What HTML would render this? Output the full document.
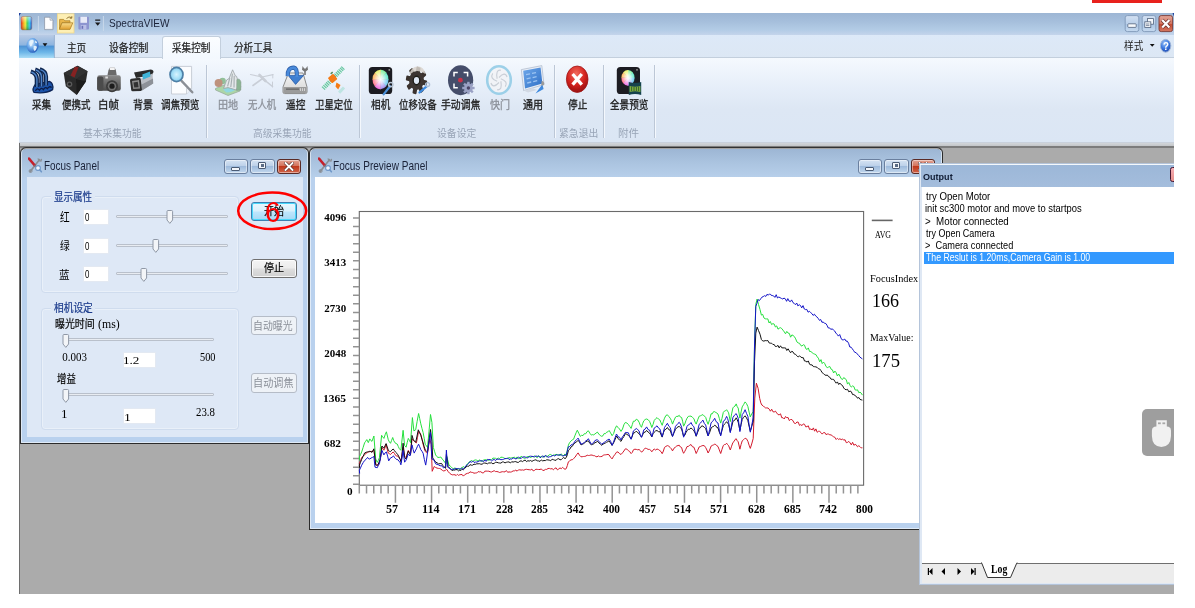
<!DOCTYPE html>
<html><head><meta charset="utf-8"><title>SpectraVIEW</title>
<style>
html,body{margin:0;padding:0;background:#fff;}
body{width:1195px;height:608px;position:relative;overflow:hidden;font-family:'Liberation Sans','Noto Sans CJK SC',sans-serif;}
div,svg{position:absolute;box-sizing:border-box;}
.t{position:absolute;white-space:nowrap;line-height:1;transform-origin:0 0;}
</style></head><body>
<div style="left:1092px;top:0px;width:70px;height:3px;background:#e8211d;"></div>
<div style="left:19px;top:13px;width:1155px;height:22px;background:linear-gradient(#9db6d4 0%,#a6bfdc 40%,#b3cce6 78%,#c4d4eb 100%);"></div>
<div style="left:19px;top:35px;width:1155px;height:23px;background:linear-gradient(#dde9f8,#dce7f4);"></div>
<div style="left:19px;top:57px;width:1155px;height:1px;background:#c3cfdd;"></div>
<div style="left:19px;top:58px;width:1155px;height:85px;background:linear-gradient(#f5f9fe 0%,#e6eef9 35%,#dde7f4 60%,#dbe6f4 100%);"></div>
<div style="left:19px;top:142px;width:1155px;height:1px;background:#c9d1dc;"></div>
<div style="left:19px;top:143px;width:1155px;height:451px;background:#ababab;"></div>
<div style="left:19px;top:143px;width:1155px;height:3.5px;background:linear-gradient(#d2d6da,#bdbfc2);"></div>
<div style="left:19px;top:146.4px;width:1155px;height:1.2px;background:#7c7c7c;"></div>
<div style="left:19px;top:143px;width:1px;height:451px;background:#6e6e6e;"></div>
<svg style="left:19px;top:13px" width="1155" height="46" viewBox="19 13 1155 46"><defs>
<linearGradient id="rainbow" x1="0" x2="1" y1="0" y2="0"><stop offset="0" stop-color="#e8281c"/><stop offset=".2" stop-color="#f59a1c"/><stop offset=".4" stop-color="#f4ea38"/><stop offset=".58" stop-color="#48d058"/><stop offset=".78" stop-color="#38c8e8"/><stop offset="1" stop-color="#2858d8"/></linearGradient>
<linearGradient id="rbshade" x1="0" x2="0" y1="0" y2="1"><stop offset="0" stop-color="#fff" stop-opacity=".55"/><stop offset=".5" stop-color="#fff" stop-opacity="0"/><stop offset="1" stop-color="#000" stop-opacity=".25"/></linearGradient>
<linearGradient id="appbtn" x1="0" x2="0" y1="0" y2="1"><stop offset="0" stop-color="#b9cbe5"/><stop offset=".42" stop-color="#8fb5df"/><stop offset=".5" stop-color="#4f95d6"/><stop offset=".75" stop-color="#6db6e8"/><stop offset="1" stop-color="#a9dcf6"/></linearGradient>
<radialGradient id="globe" cx=".4" cy=".35" r=".7"><stop offset="0" stop-color="#e8f4ff"/><stop offset=".5" stop-color="#6aa8ea"/><stop offset="1" stop-color="#2458b8"/></radialGradient>
<linearGradient id="fold" x1="0" x2="0" y1="0" y2="1"><stop offset="0" stop-color="#f8dc8c"/><stop offset="1" stop-color="#e0a030"/></linearGradient>
<linearGradient id="wbtn" x1="0" x2="0" y1="0" y2="1"><stop offset="0" stop-color="#d3e1f2"/><stop offset=".5" stop-color="#bad0ea"/><stop offset=".52" stop-color="#a9c4e3"/><stop offset="1" stop-color="#c6daf0"/></linearGradient>
<linearGradient id="wclose" x1="0" x2="0" y1="0" y2="1"><stop offset="0" stop-color="#e3a79a"/><stop offset=".5" stop-color="#d37561"/><stop offset=".52" stop-color="#c44a32"/><stop offset="1" stop-color="#d47862"/></linearGradient>
<radialGradient id="help" cx=".4" cy=".3" r=".8"><stop offset="0" stop-color="#9cc4f8"/><stop offset=".5" stop-color="#3a78e0"/><stop offset="1" stop-color="#1a40a8"/></radialGradient>
</defs><path d="M19 13 H21 L19 16Z" fill="#2040a0"/><rect x="21" y="16.5" width="10.8" height="13.4" rx="1.8" fill="url(#rainbow)"/><rect x="21" y="16.5" width="10.8" height="13.4" rx="1.8" fill="url(#rbshade)" stroke="#8a6a5a" stroke-opacity=".6" stroke-width=".7"/><path d="M38.4 16 V31" stroke="#c9d8ea" stroke-width="1"/><path d="M103.4 16 V31" stroke="#c9d8ea" stroke-width="1"/><path d="M44.6 17.2 H50 L53 20.2 V29.6 H44.6Z" fill="#fdfdfe" stroke="#8c96a6" stroke-width=".8"/><path d="M50 17.2 V20.2 H53" fill="#dfe4ec" stroke="#8c96a6" stroke-width=".6"/><path d="M46 29.3 H53 V22" stroke="#aab2c0" stroke-width="1" fill="none" opacity=".6"/><rect x="57.4" y="13.8" width="16.6" height="19.2" fill="#fdefb4" stroke="#f2d98a" stroke-width=".8"/><path d="M59.6 19.4 H63.6 L64.8 20.8 H70 V22.6 H62 L59.6 28.8Z" fill="#e9b54a" stroke="#a97a1e" stroke-width=".7"/><path d="M62 22.8 H72.8 L70 29.4 H59.4Z" fill="url(#fold)" stroke="#a97a1e" stroke-width=".7"/><path d="M66.5 18.5 Q69 15.8 71.6 17.6 M71.8 16.2 V18.2 H69.8" fill="none" stroke="#8a6c2a" stroke-width=".9"/><rect x="78.4" y="16.8" width="10.6" height="12.8" rx="1" fill="#8d95d0"/><rect x="80.4" y="16.8" width="6.6" height="6" fill="#e8ebf8"/><rect x="80.8" y="25" width="5.6" height="4.6" fill="#b9bfe6"/><rect x="81.6" y="25.8" width="1.6" height="3" fill="#6a72b8"/><path d="M95.2 19.6 H100.2 V20.8 H95.2Z M95 22.4 H100.4 L97.7 25.8Z" fill="#1a1a1a"/><rect x="19" y="35" width="35.4" height="23" fill="url(#appbtn)"/><path d="M54.4 35 V58" stroke="#8fa9cc" stroke-width=".8"/><ellipse cx="32.6" cy="45.4" rx="6" ry="7.4" fill="url(#globe)"/><path d="M29.4 41.2 q2 -2 4 -1.2 q1 2.2 -1 3.4 q-.4 2.6 -2 3.2 q-1.6 -2.4 -1 -5.4z M33.6 46 q2.4 -.6 3.4 1 q-.6 3 -2.6 4 q-1.4 -2.4 -.8 -5z M35.2 40.6 q1.6 .8 2.2 2.6 q-1.6 .2 -2.4 -.8z" fill="#e9f4fc" opacity=".92"/><path d="M42.6 43.2 H47.4 L45 46.6Z" fill="#111"/><rect x="1125.2" y="15.6" width="13.6" height="16" rx="2.2" fill="url(#wbtn)" stroke="#7f97b8" stroke-width=".9"/><rect x="1127.8" y="23.8" width="8.4" height="3.6" rx=".8" fill="#f6f9fc" stroke="#51627c" stroke-width=".8"/><rect x="1142.2" y="15.6" width="13.6" height="16" rx="2.2" fill="url(#wbtn)" stroke="#7f97b8" stroke-width=".9"/><rect x="1147.4" y="18.6" width="6" height="5.6" fill="#f6f9fc" stroke="#51627c" stroke-width=".8"/><rect x="1144.8" y="21.8" width="6" height="5.6" fill="#f6f9fc" stroke="#51627c" stroke-width=".8"/><path d="M1146.0 24 h3.4 M1146.0 25.6 h3.4" stroke="#51627c" stroke-width=".7"/><rect x="1159" y="15.6" width="13.6" height="16" rx="2.2" fill="url(#wclose)" stroke="#7a3a34" stroke-width=".9"/><path d="M1162.2 20 L1169.3999999999999 27.4 M1169.3999999999999 20 L1162.2 27.4" stroke="#6a3028" stroke-width="3.6"/><path d="M1162.2 20 L1169.3999999999999 27.4 M1169.3999999999999 20 L1162.2 27.4" stroke="#fff" stroke-width="2.2"/><path d="M1172.5 13 H1174 V16.5Z" fill="#2040a0"/><path d="M1149.8 44 H1154.6 L1152.2 46.8Z" fill="#111"/><ellipse cx="1165.6" cy="45.8" rx="5.2" ry="6.4" fill="url(#help)" stroke="#9fb6d8" stroke-width="1"/></svg>
<span class="t" style="left:1162.52px;top:40.55px;font-family:'Liberation Sans','Noto Sans CJK SC',sans-serif;font-size:11px;font-weight:bold;color:#fff;transform:scale(0.880,1.050);">?</span>
<span class="t" style="left:108.86px;top:18.07px;font-family:'Liberation Sans','Noto Sans CJK SC',sans-serif;font-size:12px;font-weight:normal;color:#1a2238;transform:scale(0.839,0.933);">SpectraVIEW</span>
<div style="left:161.5px;top:36px;width:59px;height:23px;background:linear-gradient(#fbfdff,#f3f8fe);border:1px solid #c3cfdd;border-bottom:none;border-radius:3px 3px 0 0;"></div>
<span class="t" style="left:66.50px;top:43.11px;font-family:'Liberation Sans','Noto Sans CJK SC',sans-serif;font-size:12px;font-weight:normal;color:#1e1e1e;transform:scale(0.800,0.908);-webkit-text-stroke:0.25px #1e1e1e;">主页</span>
<span class="t" style="left:109.20px;top:42.92px;font-family:'Liberation Sans','Noto Sans CJK SC',sans-serif;font-size:12px;font-weight:normal;color:#1e1e1e;transform:scale(0.819,0.917);-webkit-text-stroke:0.25px #1e1e1e;">设备控制</span>
<span class="t" style="left:172.00px;top:42.92px;font-family:'Liberation Sans','Noto Sans CJK SC',sans-serif;font-size:12px;font-weight:normal;color:#1e1e1e;transform:scale(0.800,0.917);-webkit-text-stroke:0.25px #1e1e1e;">采集控制</span>
<span class="t" style="left:233.90px;top:42.92px;font-family:'Liberation Sans','Noto Sans CJK SC',sans-serif;font-size:12px;font-weight:normal;color:#1e1e1e;transform:scale(0.802,0.917);-webkit-text-stroke:0.25px #1e1e1e;">分析工具</span>
<span class="t" style="left:1123.70px;top:41.12px;font-family:'Liberation Sans','Noto Sans CJK SC',sans-serif;font-size:12px;font-weight:normal;color:#1e1e1e;transform:scale(0.804,0.917);">样式</span>
<span class="t" style="left:32.40px;top:100.22px;font-family:'Liberation Sans','Noto Sans CJK SC',sans-serif;font-size:12px;font-weight:normal;color:#1a1a1a;transform:scale(0.800,0.917);-webkit-text-stroke:0.3px #1a1a1a;">采集</span>
<span class="t" style="left:61.70px;top:100.22px;font-family:'Liberation Sans','Noto Sans CJK SC',sans-serif;font-size:12px;font-weight:normal;color:#1a1a1a;transform:scale(0.789,0.917);-webkit-text-stroke:0.3px #1a1a1a;">便携式</span>
<span class="t" style="left:98.43px;top:100.22px;font-family:'Liberation Sans','Noto Sans CJK SC',sans-serif;font-size:12px;font-weight:normal;color:#1a1a1a;transform:scale(0.874,0.917);-webkit-text-stroke:0.3px #1a1a1a;">白帧</span>
<span class="t" style="left:132.76px;top:100.22px;font-family:'Liberation Sans','Noto Sans CJK SC',sans-serif;font-size:12px;font-weight:normal;color:#1a1a1a;transform:scale(0.839,0.917);-webkit-text-stroke:0.3px #1a1a1a;">背景</span>
<span class="t" style="left:161.30px;top:100.22px;font-family:'Liberation Sans','Noto Sans CJK SC',sans-serif;font-size:12px;font-weight:normal;color:#1a1a1a;transform:scale(0.802,0.917);-webkit-text-stroke:0.3px #1a1a1a;">调焦预览</span>
<span class="t" style="left:217.56px;top:100.22px;font-family:'Liberation Sans','Noto Sans CJK SC',sans-serif;font-size:12px;font-weight:normal;color:#8b9099;transform:scale(0.839,0.917);-webkit-text-stroke:0.3px #8b9099;">田地</span>
<span class="t" style="left:247.70px;top:100.22px;font-family:'Liberation Sans','Noto Sans CJK SC',sans-serif;font-size:12px;font-weight:normal;color:#8b9099;transform:scale(0.786,0.917);-webkit-text-stroke:0.3px #8b9099;">无人机</span>
<span class="t" style="left:286.00px;top:100.22px;font-family:'Liberation Sans','Noto Sans CJK SC',sans-serif;font-size:12px;font-weight:normal;color:#1a1a1a;transform:scale(0.808,0.917);-webkit-text-stroke:0.3px #1a1a1a;">遥控</span>
<span class="t" style="left:314.60px;top:100.22px;font-family:'Liberation Sans','Noto Sans CJK SC',sans-serif;font-size:12px;font-weight:normal;color:#1a1a1a;transform:scale(0.785,0.917);-webkit-text-stroke:0.3px #1a1a1a;">卫星定位</span>
<span class="t" style="left:370.70px;top:100.22px;font-family:'Liberation Sans','Noto Sans CJK SC',sans-serif;font-size:12px;font-weight:normal;color:#1a1a1a;transform:scale(0.804,0.917);-webkit-text-stroke:0.3px #1a1a1a;">相机</span>
<span class="t" style="left:399.20px;top:100.22px;font-family:'Liberation Sans','Noto Sans CJK SC',sans-serif;font-size:12px;font-weight:normal;color:#1a1a1a;transform:scale(0.785,0.917);-webkit-text-stroke:0.3px #1a1a1a;">位移设备</span>
<span class="t" style="left:441.00px;top:100.22px;font-family:'Liberation Sans','Noto Sans CJK SC',sans-serif;font-size:12px;font-weight:normal;color:#1a1a1a;transform:scale(0.821,0.917);-webkit-text-stroke:0.3px #1a1a1a;">手动调焦</span>
<span class="t" style="left:489.60px;top:100.22px;font-family:'Liberation Sans','Noto Sans CJK SC',sans-serif;font-size:12px;font-weight:normal;color:#8b9099;transform:scale(0.835,0.917);-webkit-text-stroke:0.3px #8b9099;">快门</span>
<span class="t" style="left:523.00px;top:100.22px;font-family:'Liberation Sans','Noto Sans CJK SC',sans-serif;font-size:12px;font-weight:normal;color:#1a1a1a;transform:scale(0.839,0.917);-webkit-text-stroke:0.3px #1a1a1a;">通用</span>
<span class="t" style="left:567.60px;top:100.22px;font-family:'Liberation Sans','Noto Sans CJK SC',sans-serif;font-size:12px;font-weight:normal;color:#1a1a1a;transform:scale(0.804,0.917);-webkit-text-stroke:0.3px #1a1a1a;">停止</span>
<span class="t" style="left:609.50px;top:100.22px;font-family:'Liberation Sans','Noto Sans CJK SC',sans-serif;font-size:12px;font-weight:normal;color:#1a1a1a;transform:scale(0.802,0.917);-webkit-text-stroke:0.3px #1a1a1a;">全景预览</span>
<span class="t" style="left:83.49px;top:129.34px;font-family:'Liberation Sans','Noto Sans CJK SC',sans-serif;font-size:12px;font-weight:normal;color:#98a4b6;transform:scale(0.813,0.842);">基本采集功能</span>
<span class="t" style="left:252.79px;top:129.34px;font-family:'Liberation Sans','Noto Sans CJK SC',sans-serif;font-size:12px;font-weight:normal;color:#98a4b6;transform:scale(0.813,0.842);">高级采集功能</span>
<span class="t" style="left:436.88px;top:129.34px;font-family:'Liberation Sans','Noto Sans CJK SC',sans-serif;font-size:12px;font-weight:normal;color:#98a4b6;transform:scale(0.819,0.842);">设备设定</span>
<span class="t" style="left:559.18px;top:129.34px;font-family:'Liberation Sans','Noto Sans CJK SC',sans-serif;font-size:12px;font-weight:normal;color:#98a4b6;transform:scale(0.820,0.842);">紧急退出</span>
<span class="t" style="left:617.82px;top:129.34px;font-family:'Liberation Sans','Noto Sans CJK SC',sans-serif;font-size:12px;font-weight:normal;color:#98a4b6;transform:scale(0.877,0.842);">附件</span>
<div style="left:206.0px;top:65px;width:1px;height:73px;background:#bcc7d6;"></div>
<div style="left:207.0px;top:65px;width:1px;height:73px;background:#f4f8fd;"></div>
<div style="left:358.8px;top:65px;width:1px;height:73px;background:#bcc7d6;"></div>
<div style="left:359.8px;top:65px;width:1px;height:73px;background:#f4f8fd;"></div>
<div style="left:554.3px;top:65px;width:1px;height:73px;background:#bcc7d6;"></div>
<div style="left:555.3px;top:65px;width:1px;height:73px;background:#f4f8fd;"></div>
<div style="left:603.1px;top:65px;width:1px;height:73px;background:#bcc7d6;"></div>
<div style="left:604.1px;top:65px;width:1px;height:73px;background:#f4f8fd;"></div>
<div style="left:654.1px;top:65px;width:1px;height:73px;background:#bcc7d6;"></div>
<div style="left:655.1px;top:65px;width:1px;height:73px;background:#f4f8fd;"></div>
<svg style="left:19px;top:58px" width="660" height="45" viewBox="19 58 660 45"><defs>
<linearGradient id="pipe" x1="0" x2="1" y1="0" y2="0"><stop offset="0" stop-color="#16386f"/><stop offset=".45" stop-color="#5d93d6"/><stop offset="1" stop-color="#17407f"/></linearGradient>
<linearGradient id="cam" x1="0" x2="0" y1="0" y2="1"><stop offset="0" stop-color="#8a8a8a"/><stop offset="1" stop-color="#4a4a4a"/></linearGradient>
<radialGradient id="lens" cx=".5" cy=".5" r=".5"><stop offset="0" stop-color="#d8f4ff"/><stop offset=".7" stop-color="#9fdcf6"/><stop offset="1" stop-color="#7cc3e6"/></radialGradient>
<radialGradient id="stopg" cx=".45" cy=".3" r=".75"><stop offset="0" stop-color="#f26a5c"/><stop offset=".55" stop-color="#d42420"/><stop offset="1" stop-color="#8e0c0c"/></radialGradient>
<radialGradient id="rb" cx=".5" cy=".5" r=".5"><stop offset="0" stop-color="#fff"/><stop offset=".35" stop-color="#fff" stop-opacity=".75"/><stop offset="1" stop-color="#fff" stop-opacity="0"/></radialGradient>
<linearGradient id="tray" x1="0" x2="0" y1="0" y2="1"><stop offset="0" stop-color="#f6f6f6"/><stop offset="1" stop-color="#d4d4d4"/></linearGradient>
<linearGradient id="mon" x1="0" x2="1" y1="0" y2="1"><stop offset="0" stop-color="#6fa8ea"/><stop offset="1" stop-color="#2f6fc6"/></linearGradient>
<filter id="soft" x="-10%" y="-10%" width="120%" height="120%"><feGaussianBlur stdDeviation="0.35"/></filter>
</defs><g filter="url(#soft)"><g>
<path d="M34 92.4 Q31.6 89 35.4 84.4 L49.5 81.4 Q54 84 52.6 89.6 Q46 94 34 92.4Z" fill="#1c54ac" stroke="#0b2558" stroke-width="1.3"/>
<path d="M36.8 87 V79 Q36.6 73.4 30.8 71.6" fill="none" stroke="#10264f" stroke-width="4.2"/>
<path d="M36.9 87 V79 Q36.8 73.8 31.4 72" fill="none" stroke="#4f84c8" stroke-width="1.4"/>
<path d="M41.4 86.4 V77 Q41.2 71.4 35.2 69.6" fill="none" stroke="#10264f" stroke-width="4.2"/>
<path d="M41.5 86.4 V77 Q41.4 71.8 35.8 70" fill="none" stroke="#4f84c8" stroke-width="1.4"/>
<path d="M46 85.6 V76.6 Q45.8 71 39.8 69.2" fill="none" stroke="#10264f" stroke-width="4.2"/>
<path d="M46.1 85.6 V76.6 Q46 71.4 40.4 69.6" fill="none" stroke="#4f84c8" stroke-width="1.4"/>
<path d="M35.4 90.8 q2-3.4 4-0.6 q2-3.4 4-0.6 q2-3.4 4-0.9 q2-3.2 4.2-1.2" fill="none" stroke="#081c46" stroke-width="1.3"/>
</g><g>
<path d="M77.6 65.8 L87.6 71.2 L85.9 81.5 L76.7 95 L65.8 86.3 L63.7 72.9Z" fill="#2b2b2b"/>
<path d="M77.6 65.8 L87.6 71.2 L76 79 L63.7 72.9Z" fill="#323232"/>
<path d="M74.8 66.8 L78.6 67 L74.5 77.5 L70.5 75.6Z" fill="#862222"/>
<path d="M76 79 L85.9 81.5 L76.7 95Z" fill="#1e1e1e"/>
<circle cx="69.5" cy="84.2" r="2.8" fill="#5a5a5a"/><circle cx="69.5" cy="84.2" r="1.4" fill="#222"/>
</g><g>
<path d="M108.5 70 L110 67.6 L114.6 67.6 L115.8 70 L116.8 75.6 L107.4 75.6Z" fill="#6a6a6a"/>
<rect x="109.8" y="67.4" width="5" height="2.6" fill="#f4f4f4"/>
<rect x="97.2" y="75.2" width="23.6" height="15.6" rx="2.2" fill="url(#cam)"/>
<rect x="97.2" y="76.5" width="6.2" height="14.3" rx="2" fill="#4c4c4c"/>
<rect x="105.3" y="76.5" width="2.6" height="2" fill="#ddd"/>
<circle cx="112" cy="86.2" r="6" fill="#3c3c3c"/><circle cx="112" cy="86.2" r="4.2" fill="#707070"/><circle cx="112" cy="86.2" r="2.6" fill="#1c1c1c"/>
</g><g>
<path d="M134 72.5 L150.5 69.5 Q153.5 69.6 153.5 72 L152 75 L136 78Z" fill="#2a2a2a"/>
<path d="M141 78.5 L152.5 73.5 L153.2 83.5 L142 90.5Z" fill="#b9bdc4"/><path d="M141.6 84.6 L153 78.6 L153.2 83.5 L142 90.5Z" fill="#8d9198"/>
<path d="M142.3 74.5 L150 71.4 L150.4 76.4 L143 79.6Z" fill="#3fb4d8"/>
<path d="M130 80.4 Q130 79 131.4 78.8 L139.2 77.8 Q140.6 77.8 140.8 79.2 L142 89.6 Q142 90.8 140.8 90.9 L132.6 91.3 Q131.4 91.2 131.2 90Z" fill="#2f2f2f"/>
<path d="M132 81 L139 80 L140 88.6 L133.2 89Z" fill="#8c8c8c"/>
<path d="M133.4 82.4 L137.8 81.8 L138.6 87.2 L134.3 87.5Z" fill="#333"/>
</g><g>
<path d="M171.5 66.4 H191.6 V88.5 L186.5 94 H171.5Z" fill="#fbfcfe" stroke="#c4c9d2" stroke-width="0.9"/>
<path d="M186.5 94 V88.5 H191.6" fill="#eef1f6" stroke="#c4c9d2" stroke-width="0.8"/>
<path d="M181.3 80.6 L192.3 92.3" stroke="#8b8f96" stroke-width="2.4" stroke-linecap="round"/>
<ellipse cx="176.5" cy="74.5" rx="6.5" ry="7.1" fill="url(#lens)" stroke="#4d7fa6" stroke-width="1.7"/>
</g><g opacity=".88">
<path d="M215.5 88.5 L229 83 L240.8 86 L240 91 L228 95.5 L215.5 90Z" fill="#a4d29c" stroke="#8a9a8a" stroke-width=".7"/>
<path d="M223 89.4 Q229 86.4 236 88.8 Q233 92.6 226.5 92.6Z" fill="#84d4de"/>
<path d="M223.6 88.4 L226.6 80 L229 78.6 L232.6 69.8 L235.4 76 L236.6 76.4 L239 84.5 L236.4 90 L228 87.6Z" fill="#e4e7e8" stroke="#8e9698" stroke-width=".8"/>
<path d="M227.6 86.4 L229.8 78 M230.8 87 L232.4 73.6 M234 87.4 L234.2 76" stroke="#9ca6a8" stroke-width="1.1"/>
<path d="M236.8 79.6 Q239.6 77.6 241 82 L240.8 90 L236.6 90.4Z" fill="#7fae86" stroke="#7a8c7e" stroke-width=".5"/>
<circle cx="222.6" cy="81" r="3.2" fill="#86b98c"/>
<circle cx="218.6" cy="83" r="4" fill="#b9866e"/>
</g><g opacity=".6" stroke="#b4b8c0" fill="none" stroke-linecap="round">
<path d="M250.5 74.5 L262 77 L273 74.6" stroke-width="1.2"/>
<path d="M253 85.5 L262.5 78.5 L272.5 86.5" stroke-width="1.6"/>
<path d="M259.5 75 L265.5 81" stroke-width="2.6"/>
<path d="M272.8 74.5 V78 M272.5 82 V87" stroke-width="1"/>
</g><g>
<path d="M288.5 73 H303 L307 87 V92 Q307 93.6 305.4 93.6 H284.6 Q283 93.6 283 92 V87Z" fill="url(#tray)" stroke="#8a8a8a" stroke-width="1"/>
<path d="M283.5 87 H306.5 V92 Q306.5 93.1 305.4 93.1 H284.6 Q283.5 93.1 283.5 92Z" fill="#9b9b9b"/>
<path d="M286 89.2 H299" stroke="#6f6f6f" stroke-width="1.6"/>
<path d="M300.5 88.2 V91 M302.5 88.2 V91 M304.5 88.2 V91" stroke="#d8d8d8" stroke-width=".9"/>
<path d="M287.8 76 Q287.2 67.8 293.8 67.6 Q297.4 68.2 296.8 77" fill="none" stroke="#2a5ca6" stroke-width="4.2"/>
<path d="M288.2 75.4 L303.6 75.4 L295.6 84.4Z" fill="#3f7fd0" stroke="#2a5ca6" stroke-width=".8"/>
<path d="M287.8 76 Q287.2 67.8 293.8 67.6 Q297.4 68.2 296.8 77" fill="none" stroke="#4a8ada" stroke-width="2.9"/>
<path d="M302.6 66 L304.2 68.6 L305.8 68.6 L307.4 66 L308 69.8 L305.8 71.4 L305.8 75 L304.2 75 L304.2 71.4 L302 69.8Z" fill="#767676"/>
</g><g>
<g transform="rotate(-46 332.7 78.6)">
<rect x="318.5" y="76.4" width="10.5" height="4.4" fill="#dff3ec"/>
<path d="M319.5 76.4v4.4M321.5 76.4v4.4M323.5 76.4v4.4M325.5 76.4v4.4M327.5 76.4v4.4" stroke="#63c3a2" stroke-width="1.1"/>
<rect x="336.5" y="76.4" width="11.5" height="4.4" fill="#dff3ec"/>
<path d="M337.5 76.4v4.4M339.5 76.4v4.4M341.5 76.4v4.4M343.5 76.4v4.4M345.5 76.4v4.4M347.3 76.4v4.4" stroke="#63c3a2" stroke-width="1.1"/>
<rect x="329" y="77.5" width="7.5" height="2.2" fill="#6a8a7c"/>
</g>
<rect x="329.2" y="75" width="7" height="7" rx="1" transform="rotate(-40 332.7 78.6)" fill="#f57a12"/>
<path d="M336.5 82.5 L340.5 85 L338.2 89.5 L335.5 86.5Z" fill="#f57a12"/>
<path d="M330.2 73.2 l2 -1.6 l1 1.2 l-2 1.6z" fill="#5a8a5a"/>
<g transform="rotate(-46 341.5 90)" opacity=".55"><rect x="338" y="88.6" width="7" height="3" fill="#9fdcd0"/></g>
</g><g><rect x="368.8" y="67" width="23.4" height="27" rx="3.6" fill="#1f1f22"/><g filter="url(#soft)"><g transform="translate(380.5 79.4) scale(1 1.22) translate(-380.5 -79.4)"><path d="M380.5 79.4 L380.50 71.40 A8 8 0 0 1 386.43 74.03Z" fill="#7ff0a0"/><path d="M380.5 79.4 L386.16 73.74 A8 8 0 0 1 388.49 79.80Z" fill="#60e8c8"/><path d="M380.5 79.4 L388.50 79.40 A8 8 0 0 1 385.87 85.33Z" fill="#70c8f0"/><path d="M380.5 79.4 L386.16 85.06 A8 8 0 0 1 380.10 87.39Z" fill="#a090f0"/><path d="M380.5 79.4 L380.50 87.40 A8 8 0 0 1 374.57 84.77Z" fill="#f070e0"/><path d="M380.5 79.4 L374.84 85.06 A8 8 0 0 1 372.51 79.00Z" fill="#ff7890"/><path d="M380.5 79.4 L372.50 79.40 A8 8 0 0 1 375.13 73.47Z" fill="#ffb860"/><path d="M380.5 79.4 L374.84 73.74 A8 8 0 0 1 380.90 71.41Z" fill="#e8f070"/><circle cx="380.5" cy="79.4" r="8" fill="url(#rb)"/></g></g><circle cx="389.3" cy="69.9" r=".9" fill="#9a9a9a"/><path d="M383.6 94.4 L390 86.2" stroke="#4a8fd8" stroke-width="2.2" stroke-linecap="round"/><circle cx="390.8" cy="84.6" r="2.2" fill="none" stroke="#b9c6d6" stroke-width="1.5"/></g><g>
<g transform="translate(416.5 80.5) scale(.78 1) translate(-416.5 -80.5)">
<g fill="#3a332e"><rect x="413.9" y="66.9" width="5.2" height="6" rx="1" transform="rotate(11.5 416.5 80.5)"/><rect x="413.9" y="66.9" width="5.2" height="6" rx="1" transform="rotate(56.5 416.5 80.5)"/><rect x="413.9" y="66.9" width="5.2" height="6" rx="1" transform="rotate(101.5 416.5 80.5)"/><rect x="413.9" y="66.9" width="5.2" height="6" rx="1" transform="rotate(146.5 416.5 80.5)"/><rect x="413.9" y="66.9" width="5.2" height="6" rx="1" transform="rotate(191.5 416.5 80.5)"/><rect x="413.9" y="66.9" width="5.2" height="6" rx="1" transform="rotate(236.5 416.5 80.5)"/><rect x="413.9" y="66.9" width="5.2" height="6" rx="1" transform="rotate(281.5 416.5 80.5)"/><rect x="413.9" y="66.9" width="5.2" height="6" rx="1" transform="rotate(326.5 416.5 80.5)"/></g>
<circle cx="416.5" cy="80.5" r="9.6" fill="#3d3631"/>
<circle cx="416.5" cy="80.5" r="4.2" fill="#dfe7f3"/>
<circle cx="416.5" cy="80.5" r="4.2" fill="none" stroke="#1c1a18" stroke-width="1.6"/>
</g>
<path d="M409 75 Q411 66.5 418 66.2 Q424 67 425.5 74 Q420 70 414 71.5Z" fill="#d9d4cc" opacity=".85"/>
<path d="M419.5 92.5 L426.6 86.4" stroke="#3d8be0" stroke-width="2.3" stroke-linecap="round"/>
<circle cx="427.6" cy="84.6" r="2" fill="none" stroke="#aebfd6" stroke-width="1.4"/>
</g><g>
<ellipse cx="460.6" cy="80.2" rx="12.6" ry="15" fill="#444e6a"/>
<path d="M454 76.6 V72.4 H457.8 M463.6 72.4 H467.6 V76.6 M467.6 83.6 V87.8 H463.6 M457.8 87.8 H454 V83.6" fill="none" stroke="#fff" stroke-width="1.5"/>
<circle cx="460.4" cy="80.2" r="2.4" fill="#c9304a"/>
<g fill="#9aa1c4"><rect x="467.2" y="81.8" width="2.4" height="3" transform="rotate(0 468.4 88)"/><rect x="467.2" y="81.8" width="2.4" height="3" transform="rotate(45 468.4 88)"/><rect x="467.2" y="81.8" width="2.4" height="3" transform="rotate(90 468.4 88)"/><rect x="467.2" y="81.8" width="2.4" height="3" transform="rotate(135 468.4 88)"/><rect x="467.2" y="81.8" width="2.4" height="3" transform="rotate(180 468.4 88)"/><rect x="467.2" y="81.8" width="2.4" height="3" transform="rotate(225 468.4 88)"/><rect x="467.2" y="81.8" width="2.4" height="3" transform="rotate(270 468.4 88)"/><rect x="467.2" y="81.8" width="2.4" height="3" transform="rotate(315 468.4 88)"/></g><circle cx="468.4" cy="88" r="4.4" fill="#9aa1c4"/><circle cx="468.4" cy="88" r="1.7" fill="#4a4466"/>
</g><g opacity=".85">
<ellipse cx="499" cy="80" rx="11.8" ry="13.8" fill="#f2f4f7" stroke="#8fcbe6" stroke-width="2.6"/>
<g transform="translate(499 80) scale(.85 1) translate(-499 -80)" fill="none" stroke="#c3c8d0" stroke-width="1.3"><path d="M499 77.5 Q506 71 508.5 77" transform="rotate(0 499 80)"/><path d="M499 77.5 Q506 71 508.5 77" transform="rotate(60 499 80)"/><path d="M499 77.5 Q506 71 508.5 77" transform="rotate(120 499 80)"/><path d="M499 77.5 Q506 71 508.5 77" transform="rotate(180 499 80)"/><path d="M499 77.5 Q506 71 508.5 77" transform="rotate(240 499 80)"/><path d="M499 77.5 Q506 71 508.5 77" transform="rotate(300 499 80)"/></g>
</g><g>
<path d="M521.3 69.6 L541.8 65.6 L544 84.6 L523.6 90.6Z" fill="#e9eef6" stroke="#aab6c8" stroke-width=".7"/>
<path d="M523.2 70.8 L540.6 67.4 L542.4 83.4 L525 88.4Z" fill="url(#mon)"/>
<path d="M526 74.6l4-.8M532 73.4l4-.8M526.6 78.8l4-.9M532.6 77.6l4-.9M527.2 83l4-1M533.2 81.6l4-1" stroke="#9cc4f2" stroke-width="1.3"/>
<path d="M523.6 90.6 L528 92.6 L537 90 L532.6 88Z" fill="#d2d9e4"/>
<path d="M535.5 93.6 L542.4 84.2 L543.6 89Z" fill="#3f8ade"/>
<path d="M541.6 81 q3 .4 2.6 3.6 q-1.4 1.6 -3 .6z" fill="#9a9a9a"/>
</g><g>
<ellipse cx="577.2" cy="79.2" rx="10.8" ry="13.2" fill="url(#stopg)" stroke="#a01818" stroke-width=".8"/>
<path d="M572.6 74 L581.8 84.6 M581.8 74 L572.6 84.6" stroke="#fff" stroke-width="3.3" stroke-linecap="butt"/>
</g><g><rect x="616.8" y="67" width="23.2" height="27" rx="3.6" fill="#1f1f22"/><g filter="url(#soft)"><g transform="translate(628 77.8) scale(1 1.2) translate(-628 -77.8)"><path d="M628 77.8 L628.00 71.20 A6.6 6.6 0 0 1 632.89 73.37Z" fill="#7ff0a0"/><path d="M628 77.8 L632.67 73.13 A6.6 6.6 0 0 1 634.59 78.13Z" fill="#60e8c8"/><path d="M628 77.8 L634.60 77.80 A6.6 6.6 0 0 1 632.43 82.69Z" fill="#70c8f0"/><path d="M628 77.8 L632.67 82.47 A6.6 6.6 0 0 1 627.67 84.39Z" fill="#a090f0"/><path d="M628 77.8 L628.00 84.40 A6.6 6.6 0 0 1 623.11 82.23Z" fill="#f070e0"/><path d="M628 77.8 L623.33 82.47 A6.6 6.6 0 0 1 621.41 77.47Z" fill="#ff7890"/><path d="M628 77.8 L621.40 77.80 A6.6 6.6 0 0 1 623.57 72.91Z" fill="#ffb860"/><path d="M628 77.8 L623.33 73.13 A6.6 6.6 0 0 1 628.33 71.21Z" fill="#e8f070"/><circle cx="628" cy="77.8" r="6.6" fill="url(#rb)"/></g></g><circle cx="637" cy="69.8" r=".9" fill="#9a9a9a"/><path d="M628.8 82 Q635 84 641.2 82 V95 Q635 93 628.8 95Z" fill="#16424e"/>
<path d="M629.6 86 Q635 87.6 640.4 86 V92 Q635 90.4 629.6 92Z" fill="#7fae3e"/>
<path d="M631.6 86.6v4.4M634 87v4M636.4 87v4M638.6 86.6v4.4" stroke="#244c2c" stroke-width=".8"/></g></g></svg>
<div style="left:19.5px;top:147px;width:289.5px;height:297px;background:linear-gradient(#9db6d4 0px,#abc4e0 14px,#b7cfea 28px,#b9d1ee 30px);border:1px solid #2b2b2b;border-top:2px solid #333;border-radius:6px 6px 0 0;"></div>
<div style="left:20.5px;top:148px;width:287.5px;height:295px;border:1px solid rgba(255,255,255,.55);border-radius:5px 5px 0 0;"></div>
<span class="t" style="left:43.67px;top:159.86px;font-family:'Liberation Sans','Noto Sans CJK SC',sans-serif;font-size:12px;font-weight:normal;color:#1a2238;transform:scale(0.826,1.044);">Focus Panel</span>
<svg style="left:28.3px;top:157px" width="15" height="16" viewBox="0 0 15 16"><path d="M2.2 14.6 L11.6 2.6" stroke="#8a8f96" stroke-width="1.7" stroke-linecap="round"/><path d="M10 1.4 L10.8 3.6 L13 4 L13.6 1.8" fill="none" stroke="#8a8f96" stroke-width="1.2"/><circle cx="2.6" cy="14" r="1.5" fill="none" stroke="#8a8f96" stroke-width="1"/><path d="M1 1.6 L6.4 8" stroke="#c4202c" stroke-width="2.6" stroke-linecap="round"/><path d="M6.4 8 L8.6 10.4" stroke="#777" stroke-width="1.2"/><circle cx="10" cy="11" r="2.4" fill="#eaf3fd" stroke="#6f97c8" stroke-width="1.1"/><path d="M11.8 12.8 L13.4 14.8" stroke="#6f97c8" stroke-width="1.5" stroke-linecap="round"/></svg>
<div style="left:26.8px;top:176.6px;width:276px;height:260.2px;background:#dee8f6;"></div>
<div style="left:223.5px;top:158.5px;width:24px;height:15px;background:linear-gradient(#d5e3f3 0%,#bdd1e9 45%,#9fbbdc 50%,#c2d8ee 100%);border:1px solid #6a7f9e;border-radius:3px;box-shadow:inset 0 0 0 1px rgba(255,255,255,.45);"></div>
<div style="left:231.0px;top:166.5px;width:9px;height:4px;background:#f4f7fb;border:1px solid #4b5c75;border-radius:1px;"></div>
<div style="left:250px;top:158.5px;width:24.5px;height:15px;background:linear-gradient(#d5e3f3 0%,#bdd1e9 45%,#9fbbdc 50%,#c2d8ee 100%);border:1px solid #6a7f9e;border-radius:3px;box-shadow:inset 0 0 0 1px rgba(255,255,255,.45);"></div>
<div style="left:258.25px;top:161.5px;width:8px;height:7px;background:#f4f7fb;border:1px solid #4b5c75;border-radius:1px;"></div>
<div style="left:260.75px;top:164.0px;width:3px;height:2.5px;background:#5b6c85;"></div>
<div style="left:276.5px;top:158.5px;width:24px;height:15px;background:linear-gradient(#e2a394 0%,#d4735c 45%,#c0391d 50%,#d0644a 100%);border:1px solid #5a2a25;border-radius:3px;box-shadow:inset 0 0 0 1px rgba(255,255,255,.45);"></div>
<svg style="left:283.5px;top:161.5px" width="10" height="9" viewBox="0 0 10 9"><path d="M1.5 1 L8.5 8 M8.5 1 L1.5 8" stroke="#5a2a25" stroke-width="3.2" stroke-linecap="square"/><path d="M1.5 1 L8.5 8 M8.5 1 L1.5 8" stroke="#fff" stroke-width="1.9" stroke-linecap="square"/></svg>
<div style="left:41px;top:195.5px;width:197.5px;height:97.0px;border:1px solid #cfdcee;border-radius:4px;box-shadow:inset 0 0 0 1px rgba(255,255,255,.35);"></div>
<div style="left:50.5px;top:194.5px;width:44.099999999999994px;height:3px;background:#dee8f6;"></div>
<span class="t" style="left:53.50px;top:190.66px;font-family:'Liberation Sans','Noto Sans CJK SC',sans-serif;font-size:12px;font-weight:normal;color:#1c3c8c;transform:scale(0.794,0.958);-webkit-text-stroke:0.25px #1c3c8c;">显示属性</span>
<div style="left:41px;top:308px;width:197.5px;height:122px;border:1px solid #cfdcee;border-radius:4px;box-shadow:inset 0 0 0 1px rgba(255,255,255,.35);"></div>
<div style="left:50.6px;top:307px;width:44.800000000000004px;height:3px;background:#dee8f6;"></div>
<span class="t" style="left:53.60px;top:301.88px;font-family:'Liberation Sans','Noto Sans CJK SC',sans-serif;font-size:12px;font-weight:normal;color:#1c3c8c;transform:scale(0.808,0.975);-webkit-text-stroke:0.25px #1c3c8c;">相机设定</span>
<span class="t" style="left:59.50px;top:211.54px;font-family:'Liberation Sans','Noto Sans CJK SC',sans-serif;font-size:12px;font-weight:normal;color:#000;transform:scale(0.808,1.036);">红</span>
<div style="left:83px;top:208.5px;width:26px;height:16.0px;background:#fff;border:1px solid #e3e9f2;"></div>
<span class="t" style="left:85.30px;top:211.84px;font-family:'Liberation Sans','Noto Sans CJK SC',sans-serif;font-size:11px;font-weight:normal;color:#000;transform:scale(0.717,0.962);">0</span>
<div style="left:115.5px;top:214.5px;width:112.5px;height:3px;background:#e8ecf2;border:1px solid #b9c0cb;border-radius:1px;"></div>
<svg style="left:165.5px;top:210.0px" width="8" height="15" viewBox="0 0 8 15"><path d="M1 1.5 Q1 0.5 2 0.5 L5.6 0.5 Q6.6 0.5 6.6 1.5 L6.6 10 L3.8 13.4 L1 10 Z" fill="#f3f5f8" stroke="#8f98a6" stroke-width="1"/></svg>
<span class="t" style="left:59.50px;top:240.45px;font-family:'Liberation Sans','Noto Sans CJK SC',sans-serif;font-size:12px;font-weight:normal;color:#000;transform:scale(0.808,0.950);">绿</span>
<div style="left:83px;top:237.5px;width:26px;height:16.0px;background:#fff;border:1px solid #e3e9f2;"></div>
<span class="t" style="left:85.30px;top:240.84px;font-family:'Liberation Sans','Noto Sans CJK SC',sans-serif;font-size:11px;font-weight:normal;color:#000;transform:scale(0.717,0.962);">0</span>
<div style="left:115.5px;top:243.5px;width:112.5px;height:3px;background:#e8ecf2;border:1px solid #b9c0cb;border-radius:1px;"></div>
<svg style="left:152.0px;top:239.0px" width="8" height="15" viewBox="0 0 8 15"><path d="M1 1.5 Q1 0.5 2 0.5 L5.6 0.5 Q6.6 0.5 6.6 1.5 L6.6 10 L3.8 13.4 L1 10 Z" fill="#f3f5f8" stroke="#8f98a6" stroke-width="1"/></svg>
<span class="t" style="left:58.62px;top:268.95px;font-family:'Liberation Sans','Noto Sans CJK SC',sans-serif;font-size:12px;font-weight:normal;color:#000;transform:scale(0.882,0.950);">蓝</span>
<div style="left:83px;top:266px;width:26px;height:16px;background:#fff;border:1px solid #e3e9f2;"></div>
<span class="t" style="left:85.30px;top:269.34px;font-family:'Liberation Sans','Noto Sans CJK SC',sans-serif;font-size:11px;font-weight:normal;color:#000;transform:scale(0.717,0.962);">0</span>
<div style="left:115.5px;top:272.0px;width:112.5px;height:3px;background:#e8ecf2;border:1px solid #b9c0cb;border-radius:1px;"></div>
<svg style="left:140.0px;top:267.5px" width="8" height="15" viewBox="0 0 8 15"><path d="M1 1.5 Q1 0.5 2 0.5 L5.6 0.5 Q6.6 0.5 6.6 1.5 L6.6 10 L3.8 13.4 L1 10 Z" fill="#f3f5f8" stroke="#8f98a6" stroke-width="1"/></svg>
<div style="left:250.5px;top:201.5px;width:46.30000000000001px;height:19.0px;background:linear-gradient(#eaf6fd 0%,#d9f0fc 48%,#bee6fd 52%,#a7d9f5 100%);border:1px solid #3c7fb1;box-shadow:inset 0 0 0 1px #48d8fb;border-radius:3px;"></div>
<span class="t" style="left:263.50px;top:206.44px;font-family:'Liberation Sans','Noto Sans CJK SC',sans-serif;font-size:12px;font-weight:normal;color:#000;transform:scale(0.833,0.942);-webkit-text-stroke:0.2px #000;">开始</span>
<div style="left:250.5px;top:258.5px;width:46.30000000000001px;height:19.5px;background:linear-gradient(#f4f4f4 0%,#ececec 48%,#dedede 52%,#d0d0d0 100%);border:1px solid #707070;box-shadow:inset 0 0 0 1px rgba(255,255,255,.8);border-radius:3px;"></div>
<span class="t" style="left:263.50px;top:263.44px;font-family:'Liberation Sans','Noto Sans CJK SC',sans-serif;font-size:12px;font-weight:normal;color:#000;transform:scale(0.833,0.942);-webkit-text-stroke:0.2px #000;">停止</span>
<div style="left:250.5px;top:316px;width:46.30000000000001px;height:19px;background:#eef2f7;border:1px solid #b5bcc7;border-radius:3px;"></div>
<span class="t" style="left:252.85px;top:320.92px;font-family:'Liberation Sans','Noto Sans CJK SC',sans-serif;font-size:12px;font-weight:normal;color:#8a8f98;transform:scale(0.826,0.917);">自动曝光</span>
<div style="left:250.5px;top:373px;width:46.30000000000001px;height:19.5px;background:#eef2f7;border:1px solid #b5bcc7;border-radius:3px;"></div>
<span class="t" style="left:252.81px;top:377.92px;font-family:'Liberation Sans','Noto Sans CJK SC',sans-serif;font-size:12px;font-weight:normal;color:#8a8f98;transform:scale(0.844,0.917);">自动调焦</span>
<svg style="left:232px;top:186px" width="82" height="50" viewBox="232 186 82 50"><ellipse cx="272.2" cy="210.8" rx="34" ry="18.2" fill="none" stroke="#f00" stroke-width="2.5"/></svg>
<span class="t" style="left:264.97px;top:197.52px;font-family:'Liberation Sans','Noto Sans CJK SC',sans-serif;font-size:27px;font-weight:normal;color:#f00;transform:scale(1.031,1.095);">6</span>
<span class="t" style="left:55.37px;top:319.33px;font-family:'Liberation Sans','Noto Sans CJK SC',sans-serif;font-size:12px;font-weight:normal;color:#000;transform:scale(0.826,0.933);-webkit-text-stroke:0.2px #000;">曝光时间</span>
<span class="t" style="left:97.50px;top:316.80px;font-family:'Liberation Serif','Noto Serif CJK SC',serif;font-size:12px;font-weight:normal;color:#000;transform:scale(0.986,1.100);">(ms)</span>
<div style="left:63px;top:338.0px;width:151px;height:3px;background:#e8ecf2;border:1px solid #b9c0cb;border-radius:1px;"></div>
<svg style="left:62.0px;top:333.5px" width="8" height="15" viewBox="0 0 8 15"><path d="M1 1.5 Q1 0.5 2 0.5 L5.6 0.5 Q6.6 0.5 6.6 1.5 L6.6 10 L3.8 13.4 L1 10 Z" fill="#f3f5f8" stroke="#8f98a6" stroke-width="1"/></svg>
<span class="t" style="left:62.20px;top:351.49px;font-family:'Liberation Serif','Noto Serif CJK SC',serif;font-size:11px;font-weight:normal;color:#000;transform:scale(1.000,1.057);">0.003</span>
<div style="left:123px;top:351.8px;width:33px;height:16.0px;background:#fff;border:1px solid #e3e9f2;"></div>
<span class="t" style="left:123.22px;top:355.40px;font-family:'Liberation Serif','Noto Serif CJK SC',serif;font-size:11px;font-weight:normal;color:#000;transform:scale(1.191,1.000);">1.2</span>
<span class="t" style="left:199.96px;top:351.49px;font-family:'Liberation Serif','Noto Serif CJK SC',serif;font-size:11px;font-weight:normal;color:#000;transform:scale(0.940,1.057);">500</span>
<span class="t" style="left:56.80px;top:373.92px;font-family:'Liberation Sans','Noto Sans CJK SC',sans-serif;font-size:12px;font-weight:normal;color:#000;transform:scale(0.783,0.917);-webkit-text-stroke:0.2px #000;">增益</span>
<div style="left:63px;top:393.0px;width:151px;height:3px;background:#e8ecf2;border:1px solid #b9c0cb;border-radius:1px;"></div>
<svg style="left:62.0px;top:388.5px" width="8" height="15" viewBox="0 0 8 15"><path d="M1 1.5 Q1 0.5 2 0.5 L5.6 0.5 Q6.6 0.5 6.6 1.5 L6.6 10 L3.8 13.4 L1 10 Z" fill="#f3f5f8" stroke="#8f98a6" stroke-width="1"/></svg>
<span class="t" style="left:60.80px;top:408.49px;font-family:'Liberation Serif','Noto Serif CJK SC',serif;font-size:11px;font-weight:normal;color:#000;transform:scale(1.200,1.057);">1</span>
<div style="left:123px;top:407.8px;width:33px;height:16.19999999999999px;background:#fff;border:1px solid #e3e9f2;"></div>
<span class="t" style="left:123.70px;top:411.66px;font-family:'Liberation Serif','Noto Serif CJK SC',serif;font-size:11px;font-weight:normal;color:#000;transform:scale(1.250,0.971);">1</span>
<span class="t" style="left:196.30px;top:405.66px;font-family:'Liberation Serif','Noto Serif CJK SC',serif;font-size:11px;font-weight:normal;color:#000;transform:scale(0.984,1.071);">23.8</span>
<div style="left:309px;top:147px;width:634px;height:383px;background:linear-gradient(#9db6d4 0px,#abc4e0 14px,#b7cfea 28px,#b9d1ee 30px);border:1px solid #2b2b2b;border-top:2px solid #333;border-radius:6px 6px 0 0;"></div>
<div style="left:310px;top:148px;width:632px;height:381px;border:1px solid rgba(255,255,255,.55);border-radius:5px 5px 0 0;"></div>
<span class="t" style="left:332.66px;top:159.86px;font-family:'Liberation Sans','Noto Sans CJK SC',sans-serif;font-size:12px;font-weight:normal;color:#1a2238;transform:scale(0.838,1.044);">Focus Preview Panel</span>
<svg style="left:317.8px;top:157px" width="15" height="16" viewBox="0 0 15 16"><path d="M2.2 14.6 L11.6 2.6" stroke="#8a8f96" stroke-width="1.7" stroke-linecap="round"/><path d="M10 1.4 L10.8 3.6 L13 4 L13.6 1.8" fill="none" stroke="#8a8f96" stroke-width="1.2"/><circle cx="2.6" cy="14" r="1.5" fill="none" stroke="#8a8f96" stroke-width="1"/><path d="M1 1.6 L6.4 8" stroke="#c4202c" stroke-width="2.6" stroke-linecap="round"/><path d="M6.4 8 L8.6 10.4" stroke="#777" stroke-width="1.2"/><circle cx="10" cy="11" r="2.4" fill="#eaf3fd" stroke="#6f97c8" stroke-width="1.1"/><path d="M11.8 12.8 L13.4 14.8" stroke="#6f97c8" stroke-width="1.5" stroke-linecap="round"/></svg>
<div style="left:315px;top:177px;width:622px;height:346px;background:#fff;"></div>
<div style="left:857.5px;top:158.5px;width:24px;height:15px;background:linear-gradient(#d5e3f3 0%,#bdd1e9 45%,#9fbbdc 50%,#c2d8ee 100%);border:1px solid #6a7f9e;border-radius:3px;box-shadow:inset 0 0 0 1px rgba(255,255,255,.45);"></div>
<div style="left:865.0px;top:166.5px;width:9px;height:4px;background:#f4f7fb;border:1px solid #4b5c75;border-radius:1px;"></div>
<div style="left:884px;top:158.5px;width:24.5px;height:15px;background:linear-gradient(#d5e3f3 0%,#bdd1e9 45%,#9fbbdc 50%,#c2d8ee 100%);border:1px solid #6a7f9e;border-radius:3px;box-shadow:inset 0 0 0 1px rgba(255,255,255,.45);"></div>
<div style="left:892.25px;top:161.5px;width:8px;height:7px;background:#f4f7fb;border:1px solid #4b5c75;border-radius:1px;"></div>
<div style="left:894.75px;top:164.0px;width:3px;height:2.5px;background:#5b6c85;"></div>
<div style="left:910.5px;top:158.5px;width:24px;height:15px;background:linear-gradient(#e2a394 0%,#d4735c 45%,#c0391d 50%,#d0644a 100%);border:1px solid #5a2a25;border-radius:3px;box-shadow:inset 0 0 0 1px rgba(255,255,255,.45);"></div>
<svg style="left:917.5px;top:161.5px" width="10" height="9" viewBox="0 0 10 9"><path d="M1.5 1 L8.5 8 M8.5 1 L1.5 8" stroke="#5a2a25" stroke-width="3.2" stroke-linecap="square"/><path d="M1.5 1 L8.5 8 M8.5 1 L1.5 8" stroke="#fff" stroke-width="1.9" stroke-linecap="square"/></svg>
<svg style="left:315px;top:177px" width="610" height="346" viewBox="315 177 610 346"><rect x="359.3" y="211.5" width="504.3" height="273.7" fill="#fff" stroke="#6a6a6a" stroke-width="1.1"/><path d="M353 217.90H359.3M353 226.49H359.3M353 235.09H359.3M353 243.68H359.3M353 252.28H359.3M353 260.87H359.3M353 269.46H359.3M353 278.06H359.3M353 286.65H359.3M353 295.25H359.3M353 303.84H359.3M353 312.43H359.3M353 321.03H359.3M353 329.62H359.3M353 338.22H359.3M353 346.81H359.3M353 355.40H359.3M353 364.00H359.3M353 372.59H359.3M353 381.19H359.3M353 389.78H359.3M353 398.37H359.3M353 406.97H359.3M353 415.56H359.3M353 424.16H359.3M353 432.75H359.3M353 441.34H359.3M353 449.94H359.3M353 458.53H359.3M353 467.13H359.3M353 475.72H359.3M353 484.31H359.3" stroke="#939393" stroke-width="1.5" fill="none"/><path d="M359.30 485.2V493.6M366.53 485.2V493.6M373.75 485.2V493.6M380.98 485.2V493.6M388.20 485.2V493.6M395.43 485.2V502.8M402.66 485.2V493.6M409.88 485.2V493.6M417.11 485.2V493.6M424.33 485.2V493.6M431.56 485.2V502.8M438.79 485.2V493.6M446.01 485.2V493.6M453.24 485.2V493.6M460.46 485.2V493.6M467.69 485.2V502.8M474.92 485.2V493.6M482.14 485.2V493.6M489.37 485.2V493.6M496.59 485.2V493.6M503.82 485.2V502.8M511.05 485.2V493.6M518.27 485.2V493.6M525.50 485.2V493.6M532.72 485.2V493.6M539.95 485.2V502.8M547.18 485.2V493.6M554.40 485.2V493.6M561.63 485.2V493.6M568.85 485.2V493.6M576.08 485.2V502.8M583.31 485.2V493.6M590.53 485.2V493.6M597.76 485.2V493.6M604.98 485.2V493.6M612.21 485.2V502.8M619.44 485.2V493.6M626.66 485.2V493.6M633.89 485.2V493.6M641.11 485.2V493.6M648.34 485.2V502.8M655.57 485.2V493.6M662.79 485.2V493.6M670.02 485.2V493.6M677.24 485.2V493.6M684.47 485.2V502.8M691.70 485.2V493.6M698.92 485.2V493.6M706.15 485.2V493.6M713.37 485.2V493.6M720.60 485.2V502.8M727.83 485.2V493.6M735.05 485.2V493.6M742.28 485.2V493.6M749.50 485.2V493.6M756.73 485.2V502.8M763.96 485.2V493.6M771.18 485.2V493.6M778.41 485.2V493.6M785.63 485.2V493.6M792.86 485.2V502.8M800.09 485.2V493.6M807.31 485.2V493.6M814.54 485.2V493.6M821.76 485.2V493.6M828.99 485.2V502.8M836.22 485.2V493.6M843.44 485.2V493.6M850.67 485.2V493.6M857.89 485.2V493.6" stroke="#939393" stroke-width="1.5" fill="none"/><path d="M359.6 466.5 L359.4 463.4 L360.5 460.8 L361.7 457.4 L363.1 456.3 L364.6 454.7 L366.1 453.3 L367.6 452.5 L368.7 451.8 L369.8 451.7 L370.9 451.4 L372.0 451.5 L373.9 450.3 L375.7 463.8 L376.8 464.4 L377.9 465.7 L379.0 462.6 L380.2 459.5 L381.9 447.4 L383.9 450.2 L385.0 447.8 L386.1 444.1 L387.2 449.1 L388.3 453.1 L389.4 453.7 L390.5 454.5 L391.8 453.1 L393.2 452.0 L394.4 453.4 L395.7 455.5 L396.8 456.0 L397.9 456.1 L399.0 457.8 L400.1 458.9 L401.2 460.4 L403.1 447.2 L404.6 456.3 L406.1 457.7 L407.2 453.8 L408.3 450.4 L409.4 452.5 L410.5 454.6 L412.0 438.7 L413.1 440.1 L414.2 441.3 L415.3 442.2 L416.4 442.9 L417.5 437.3 L418.6 431.2 L419.7 432.4 L420.8 434.4 L422.0 438.9 L423.1 444.3 L424.2 448.3 L425.3 451.6 L426.4 452.5 L427.5 453.0 L428.6 446.0 L429.7 438.6 L431.2 444.4 L432.2 471.3 L434.2 466.5 L435.6 467.5 L437.1 468.1 L438.4 468.4 L439.6 468.5 L440.8 469.0 L442.3 470.3 L443.8 471.0 L445.3 470.4 L446.7 469.3 L448.2 471.6 L449.7 473.3 L451.2 474.4 L452.7 474.9 L453.8 474.7 L455.0 474.8 L456.2 475.5 L457.4 474.3 L458.6 475.4 L459.8 474.7 L460.9 474.6 L462.1 474.5 L463.3 476.1 L464.5 474.9 L466.0 473.9 L467.5 473.3 L468.9 473.1 L470.0 471.8 L471.3 472.3 L472.7 472.5 L474.0 473.2 L475.4 473.0 L476.7 473.0 L478.1 471.6 L479.4 471.9 L480.8 471.7 L482.1 472.8 L483.5 472.9 L484.8 471.2 L486.1 471.1 L487.5 471.2 L488.8 471.2 L490.2 471.8 L491.5 472.0 L492.9 471.3 L494.2 470.7 L495.6 471.6 L496.9 471.5 L498.3 471.9 L499.6 472.5 L500.9 472.1 L502.3 471.7 L503.6 471.8 L505.0 471.9 L506.3 470.5 L507.7 472.3 L509.0 471.9 L510.4 472.1 L511.7 471.8 L513.1 470.9 L514.4 470.9 L515.8 470.1 L517.1 471.2 L518.4 469.9 L519.8 469.8 L521.1 470.1 L522.5 469.9 L523.8 470.2 L525.2 469.5 L526.5 469.3 L527.9 469.6 L529.2 469.7 L530.6 469.9 L531.9 469.1 L533.2 470.9 L534.6 470.3 L535.9 469.2 L537.3 469.4 L538.6 469.5 L540.0 469.5 L541.3 468.9 L542.7 470.4 L544.0 470.4 L545.4 469.4 L546.7 469.4 L548.0 468.5 L549.4 468.4 L550.7 468.9 L552.1 468.6 L553.4 469.8 L554.8 468.3 L556.1 467.9 L557.5 469.9 L558.8 468.9 L560.0 467.9 L561.3 468.7 L562.5 467.4 L563.7 468.4 L565.0 469.3 L566.2 468.7 L567.3 465.6 L568.4 461.8 L569.7 460.9 L571.0 459.8 L572.3 459.8 L573.6 458.5 L575.1 457.2 L576.6 454.7 L578.1 452.9 L579.5 455.3 L581.0 456.8 L582.2 456.7 L583.5 456.5 L584.7 456.4 L585.9 456.1 L587.2 455.2 L588.4 455.5 L589.6 455.4 L590.9 455.0 L592.1 455.1 L593.3 455.6 L594.6 455.7 L595.8 456.5 L597.0 456.9 L598.3 455.9 L599.5 456.6 L600.7 456.6 L602.0 456.4 L603.2 455.3 L604.4 454.9 L605.6 454.8 L606.8 454.6 L608.0 454.4 L609.1 454.9 L610.6 457.3 L612.1 458.9 L613.6 456.2 L615.1 454.3 L616.5 452.2 L618.0 451.9 L619.5 453.6 L621.0 454.5 L622.5 452.8 L623.9 451.0 L625.4 448.8 L626.9 449.1 L628.4 450.7 L629.7 451.5 L631.1 453.6 L632.3 452.4 L633.4 449.8 L634.9 449.2 L636.3 449.4 L637.7 449.8 L639.1 449.5 L640.3 450.6 L641.5 452.1 L642.6 451.5 L643.8 449.6 L645.2 448.1 L646.6 448.5 L648.1 449.4 L649.5 449.4 L650.7 450.2 L651.8 451.8 L653.0 450.1 L654.2 449.0 L655.6 450.0 L657.0 449.0 L658.4 449.5 L659.9 450.7 L661.0 451.6 L662.2 453.7 L663.4 451.0 L664.5 447.4 L665.9 446.4 L667.4 445.6 L668.8 446.2 L670.2 447.5 L671.4 448.8 L672.5 450.9 L674.0 448.2 L675.5 447.1 L676.8 445.9 L678.0 445.6 L679.2 445.2 L680.4 447.0 L681.6 447.5 L682.6 451.1 L683.6 453.3 L684.8 451.3 L685.9 449.2 L687.0 446.6 L688.3 446.4 L689.7 445.3 L691.0 444.5 L692.5 446.8 L693.9 447.2 L695.1 450.4 L696.2 453.5 L697.7 450.3 L699.2 446.9 L700.4 446.5 L701.7 445.9 L702.9 445.5 L704.3 445.7 L705.7 447.6 L706.9 450.0 L708.1 453.0 L709.6 450.1 L711.1 446.1 L712.3 445.4 L713.5 444.9 L714.7 444.2 L715.8 444.5 L716.9 445.8 L718.0 446.5 L719.3 449.9 L720.7 453.5 L722.0 449.3 L723.3 445.5 L724.4 444.6 L725.5 444.5 L726.6 443.2 L727.6 444.6 L728.6 445.7 L730.3 450.0 L731.6 446.2 L732.9 442.5 L734.0 441.6 L735.1 439.5 L736.2 438.7 L737.2 440.7 L738.2 441.8 L739.9 449.2 L741.1 444.4 L742.2 440.9 L743.6 439.7 L745.1 438.2 L746.5 438.8 L747.9 441.3 L749.1 445.2 L750.3 448.4 L751.7 444.0 L753.2 438.5 L754.8 398.1 L756.4 383.2 L758.1 388.3 L759.7 398.4 L760.8 402.9 L761.9 405.1 L763.0 405.7 L764.3 407.0 L765.5 407.9 L766.7 407.9 L768.0 408.0 L769.2 409.1 L770.4 411.2 L771.7 409.2 L772.9 411.7 L774.2 412.0 L775.4 411.1 L776.7 412.9 L778.0 414.6 L779.2 414.8 L780.5 413.8 L781.8 417.8 L783.0 417.7 L784.3 419.0 L785.5 416.5 L786.8 417.7 L788.1 417.5 L789.3 420.6 L790.6 419.5 L791.9 419.5 L793.1 421.0 L794.4 423.3 L795.7 423.5 L796.9 422.0 L798.2 422.1 L799.5 425.4 L800.7 424.6 L802.0 425.6 L803.3 423.9 L804.5 424.3 L805.8 426.9 L807.1 426.6 L808.3 425.8 L809.6 429.5 L810.9 428.9 L812.1 430.0 L813.4 427.9 L814.6 431.2 L815.9 428.9 L817.2 432.3 L818.4 431.3 L819.7 431.4 L821.0 432.6 L822.2 434.1 L823.5 432.6 L824.8 432.6 L826.0 434.6 L827.3 434.0 L828.6 434.1 L829.8 434.8 L831.1 434.9 L832.4 435.9 L833.6 436.8 L834.9 437.3 L836.2 439.5 L837.4 438.3 L838.7 439.5 L839.9 438.7 L841.2 439.7 L842.5 438.9 L843.7 440.2 L845.0 439.7 L846.3 442.7 L847.5 442.4 L848.8 441.4 L850.1 442.9 L851.3 444.9 L852.6 442.3 L853.9 445.3 L855.1 444.3 L856.3 445.0 L857.5 446.8 L858.8 445.7 L860.0 446.7 L861.2 447.9 L862.4 447.8" fill="none" stroke="#d3192c" stroke-width="1.0" stroke-linejoin="round"/><path d="M359.6 460.3 L359.4 456.9 L360.5 454.7 L361.7 451.9 L363.1 447.5 L364.6 442.8 L365.7 441.3 L366.8 439.6 L368.3 442.6 L369.8 438.9 L370.9 440.6 L372.0 441.3 L373.9 436.0 L375.7 458.9 L377.2 462.4 L378.3 460.3 L379.4 457.8 L380.5 446.4 L381.6 435.3 L382.7 436.8 L383.9 438.4 L385.1 434.8 L386.4 431.8 L388.3 439.8 L389.4 441.9 L390.5 443.3 L391.6 440.4 L392.7 437.5 L393.8 440.8 L395.0 442.8 L396.1 443.5 L397.2 444.0 L398.3 446.5 L399.4 448.8 L400.9 450.3 L402.0 440.0 L403.1 430.3 L404.6 445.5 L406.1 447.2 L407.2 442.5 L408.3 438.4 L409.4 440.3 L410.5 442.6 L412.4 417.6 L413.9 430.9 L415.7 429.7 L417.1 421.5 L418.6 413.5 L419.7 418.6 L420.8 423.8 L422.0 428.5 L423.1 432.5 L424.2 438.3 L425.3 444.7 L426.4 445.5 L427.5 447.5 L429.0 431.2 L430.5 414.5 L431.9 422.4 L433.4 447.6 L434.5 451.2 L435.6 454.9 L436.8 456.5 L437.9 457.4 L439.3 457.4 L440.8 457.0 L442.3 459.1 L443.8 460.9 L444.9 462.5 L446.0 463.7 L446.7 456.5 L447.9 460.8 L449.0 465.2 L450.2 466.1 L451.4 467.1 L452.7 468.5 L453.8 468.7 L455.0 467.9 L456.2 469.6 L457.4 468.9 L458.6 469.0 L459.8 468.8 L460.9 468.6 L462.1 467.9 L463.3 466.4 L464.5 467.9 L466.0 466.1 L467.5 463.6 L468.7 462.6 L470.0 461.7 L471.3 460.3 L472.7 461.7 L474.0 460.4 L475.4 459.9 L476.7 460.2 L478.1 461.2 L479.4 459.8 L480.8 460.9 L482.1 461.4 L483.5 460.1 L484.8 459.7 L486.1 459.8 L487.5 460.1 L488.8 460.2 L490.2 459.7 L491.5 459.6 L492.9 458.1 L494.2 458.2 L495.6 458.3 L496.9 459.3 L498.3 458.1 L499.6 458.6 L500.9 457.2 L502.3 457.3 L503.6 457.7 L505.0 458.6 L506.3 458.6 L507.7 458.5 L509.0 457.5 L510.4 458.0 L511.7 457.8 L513.1 457.7 L514.4 457.0 L515.8 458.6 L517.1 456.9 L518.4 458.7 L519.8 458.5 L521.1 456.2 L522.5 457.2 L523.8 458.0 L525.2 458.3 L526.5 457.0 L527.9 456.5 L529.2 456.5 L530.6 458.0 L531.9 456.2 L533.2 457.0 L534.6 455.9 L535.9 456.7 L537.3 457.7 L538.6 455.6 L540.0 457.2 L541.3 456.4 L542.7 457.2 L544.0 456.6 L545.4 455.5 L546.7 457.0 L548.0 455.9 L549.4 454.7 L550.7 454.5 L552.1 455.6 L553.4 455.4 L554.8 454.9 L556.1 454.4 L557.5 454.8 L558.8 454.7 L560.0 455.8 L561.3 453.8 L562.5 455.5 L563.7 455.7 L565.0 453.9 L566.2 455.5 L567.3 450.1 L568.4 445.1 L569.7 442.4 L571.0 441.2 L572.3 439.8 L573.6 439.2 L574.8 435.9 L576.1 432.8 L577.3 430.2 L578.8 433.3 L580.3 436.4 L581.6 435.3 L583.0 435.6 L584.3 433.7 L585.7 433.8 L587.1 431.6 L588.4 430.8 L589.9 433.3 L591.4 435.1 L592.6 434.6 L593.7 434.9 L594.9 434.0 L596.1 433.1 L597.3 432.0 L598.8 434.0 L600.3 435.6 L601.7 436.3 L603.0 435.7 L604.2 433.5 L605.4 433.7 L606.7 432.2 L607.9 431.8 L609.1 430.5 L610.6 432.9 L612.1 435.7 L613.6 433.6 L615.1 428.7 L616.5 425.9 L618.0 427.3 L619.5 429.0 L621.0 431.4 L622.5 429.0 L623.9 424.7 L625.4 422.4 L626.9 423.0 L628.4 424.5 L629.7 426.4 L631.1 428.4 L632.3 424.6 L633.4 421.2 L634.9 421.2 L636.3 419.2 L637.7 419.9 L639.1 422.2 L640.3 425.4 L641.5 427.3 L642.6 423.7 L643.8 420.8 L645.2 419.5 L646.6 419.0 L648.1 419.7 L649.5 421.3 L650.7 424.1 L651.8 427.5 L653.0 424.5 L654.2 420.5 L655.6 418.8 L657.0 417.6 L658.4 419.0 L659.9 420.0 L661.0 422.7 L662.2 425.3 L663.4 421.3 L664.5 418.2 L665.9 415.5 L667.4 414.8 L668.8 416.5 L670.2 418.2 L671.4 420.5 L672.5 424.1 L674.0 420.3 L675.5 417.1 L676.8 416.3 L678.0 416.4 L679.2 415.3 L680.4 417.1 L681.6 417.5 L682.6 421.2 L683.6 426.2 L684.8 424.0 L685.9 420.7 L687.0 418.2 L688.3 416.4 L689.7 416.2 L691.0 416.1 L692.5 417.4 L693.9 418.7 L695.1 422.1 L696.2 424.1 L697.7 419.8 L699.2 416.2 L700.4 415.8 L701.7 415.2 L702.9 414.6 L704.3 416.0 L705.7 417.4 L706.9 421.3 L708.1 424.3 L709.6 419.5 L711.1 413.8 L712.3 413.8 L713.5 411.7 L714.7 411.7 L715.8 412.5 L716.9 413.1 L718.0 414.1 L719.3 418.3 L720.7 423.1 L722.0 418.3 L723.3 412.4 L724.4 411.1 L725.5 410.8 L726.6 409.7 L727.6 411.2 L728.6 412.8 L730.3 421.6 L731.6 413.9 L732.9 407.9 L734.0 406.6 L735.1 406.0 L736.2 403.9 L737.2 406.6 L738.2 408.1 L739.9 418.1 L741.1 411.9 L742.2 406.9 L743.6 404.6 L745.1 401.9 L746.5 403.6 L747.9 406.6 L749.1 412.1 L750.3 416.9 L751.7 413.9 L753.2 411.8 L754.5 346.4 L755.8 304.3 L757.1 299.0 L758.5 304.5 L760.0 309.5 L761.4 315.1 L762.7 314.4 L763.9 317.9 L765.2 318.8 L766.5 318.9 L767.8 318.9 L769.1 323.0 L770.3 321.5 L771.6 324.6 L772.9 323.6 L774.2 324.1 L775.4 327.0 L776.7 325.9 L778.0 329.2 L779.2 328.2 L780.5 327.7 L781.8 328.6 L783.0 330.2 L784.3 331.9 L785.5 333.8 L786.8 331.4 L788.1 333.1 L789.3 333.4 L790.6 337.2 L791.9 334.9 L793.1 335.5 L794.4 336.6 L795.7 338.9 L796.9 341.9 L798.2 342.9 L799.5 343.3 L800.7 345.4 L802.0 346.1 L803.3 344.7 L804.5 345.2 L805.8 348.7 L807.1 349.5 L808.3 347.9 L809.6 351.5 L810.9 351.5 L812.1 352.6 L813.4 353.6 L814.6 354.1 L815.9 354.6 L817.2 356.8 L818.4 358.2 L819.7 361.8 L821.0 359.6 L822.2 363.6 L823.5 362.1 L824.8 363.7 L826.0 366.5 L827.3 367.6 L828.6 367.0 L829.8 366.5 L831.1 369.2 L832.4 369.8 L833.6 373.0 L834.9 371.1 L836.2 372.8 L837.4 376.0 L838.7 374.0 L839.9 376.1 L841.2 378.7 L842.5 379.5 L843.7 377.6 L845.0 378.6 L846.3 379.7 L847.5 384.1 L848.8 382.5 L850.1 385.5 L851.3 387.1 L852.6 385.9 L853.9 386.6 L855.1 389.9 L856.3 390.1 L857.5 389.8 L858.8 392.7 L860.0 392.2 L861.2 393.1 L862.4 395.1" fill="none" stroke="#25e03c" stroke-width="1.0" stroke-linejoin="round"/><path d="M359.6 467.8 L359.4 465.2 L360.5 462.4 L361.7 459.3 L363.1 456.5 L364.6 453.0 L366.1 452.3 L367.6 451.8 L368.7 451.7 L369.8 451.3 L370.9 451.7 L372.0 452.4 L373.9 448.8 L375.7 465.1 L376.8 465.4 L377.9 464.9 L379.0 462.4 L380.2 459.3 L381.9 446.0 L383.9 448.2 L385.0 445.9 L386.1 443.6 L387.2 446.9 L388.3 450.2 L389.4 451.3 L390.5 451.6 L391.8 450.1 L393.2 449.0 L394.4 450.5 L395.7 452.3 L396.8 453.3 L397.9 454.8 L399.0 456.8 L400.1 459.4 L401.2 462.4 L403.1 443.2 L404.6 457.6 L406.1 459.0 L407.2 454.8 L408.3 451.0 L409.4 453.1 L410.5 454.7 L412.0 435.4 L413.4 439.9 L414.6 441.1 L415.7 442.3 L417.0 436.1 L418.3 429.8 L419.6 432.7 L420.8 435.3 L422.0 439.5 L423.1 442.8 L424.2 446.7 L425.3 450.2 L426.4 451.2 L427.5 451.6 L429.0 440.5 L430.5 429.5 L431.9 441.2 L432.7 457.9 L434.2 460.0 L435.6 462.1 L437.1 462.8 L438.6 463.9 L440.1 463.6 L441.6 463.5 L442.7 465.3 L443.8 466.7 L445.6 468.3 L446.4 454.5 L448.2 466.6 L449.5 468.1 L450.7 469.3 L451.9 470.5 L453.3 470.0 L454.6 470.1 L455.9 469.6 L457.2 469.7 L458.6 470.9 L459.8 470.1 L460.9 470.5 L462.1 469.2 L463.3 469.8 L464.5 468.7 L466.0 466.9 L467.5 466.2 L468.7 466.3 L470.0 464.6 L471.3 465.2 L472.7 465.1 L474.0 464.2 L475.4 464.4 L476.7 463.8 L478.1 463.8 L479.4 463.7 L480.8 464.2 L482.1 464.2 L483.5 463.2 L484.8 463.0 L486.1 463.3 L487.5 463.8 L488.8 462.9 L490.2 463.0 L491.5 462.8 L492.9 463.8 L494.2 463.3 L495.6 462.3 L496.9 462.3 L498.3 462.8 L499.6 463.0 L500.9 463.1 L502.3 462.0 L503.6 462.0 L505.0 462.9 L506.3 462.3 L507.7 462.0 L509.0 461.9 L510.4 463.0 L511.7 461.7 L513.1 462.1 L514.4 461.7 L515.8 461.6 L517.1 462.3 L518.4 462.4 L519.8 461.2 L521.1 460.8 L522.5 461.6 L523.8 460.6 L525.2 460.1 L526.5 461.6 L527.9 460.7 L529.2 461.1 L530.6 460.5 L531.9 461.4 L533.2 460.6 L534.6 460.1 L535.9 459.8 L537.3 460.8 L538.6 460.9 L540.0 461.4 L541.3 459.9 L542.7 460.9 L544.0 460.5 L545.4 460.6 L546.7 459.8 L548.0 459.9 L549.4 460.2 L550.7 460.8 L552.1 459.2 L553.4 459.7 L554.8 460.2 L556.1 460.3 L557.5 458.8 L558.8 458.7 L560.0 459.8 L561.3 459.6 L562.5 458.4 L563.7 457.4 L565.0 458.7 L566.2 457.6 L567.3 454.8 L568.4 450.5 L569.7 449.4 L571.0 446.9 L572.3 446.3 L573.6 444.1 L575.1 442.8 L576.6 441.9 L578.1 440.3 L579.5 442.1 L581.0 444.9 L582.2 444.3 L583.5 443.7 L584.7 442.8 L585.9 441.7 L587.2 441.1 L588.4 440.9 L589.9 443.5 L591.4 444.7 L592.6 444.5 L593.7 444.0 L594.9 442.3 L596.1 442.6 L597.3 441.1 L598.8 442.8 L600.3 444.0 L601.7 445.3 L603.0 444.1 L604.2 443.6 L605.4 443.0 L606.7 442.1 L607.9 441.7 L609.1 440.7 L610.6 443.2 L612.1 445.4 L613.6 442.8 L615.1 439.5 L616.5 436.0 L618.0 438.3 L619.5 440.1 L621.0 441.4 L622.5 438.5 L623.9 436.5 L625.4 433.6 L626.9 434.3 L628.4 435.5 L629.7 436.7 L631.1 438.9 L632.3 436.1 L633.4 432.9 L634.9 432.6 L636.3 431.1 L637.7 432.7 L639.1 433.6 L640.3 435.4 L641.5 437.0 L642.6 434.9 L643.8 432.3 L645.2 432.2 L646.6 430.4 L648.1 432.1 L649.5 433.0 L650.7 434.9 L651.8 437.0 L653.0 433.8 L654.2 432.2 L655.6 430.9 L657.0 430.5 L658.4 431.6 L659.9 431.7 L661.0 434.7 L662.2 437.1 L663.4 432.8 L664.5 429.9 L665.9 429.3 L667.4 427.5 L668.8 429.7 L670.2 430.2 L671.4 434.0 L672.5 436.3 L674.0 432.8 L675.5 429.3 L676.8 427.7 L678.0 426.9 L679.2 426.3 L680.4 427.6 L681.6 429.0 L682.6 432.6 L683.6 436.3 L684.8 435.2 L685.9 432.7 L687.0 430.8 L688.3 429.2 L689.7 429.3 L691.0 427.9 L692.5 429.4 L693.9 430.7 L695.1 433.1 L696.2 436.3 L697.7 432.1 L699.2 428.3 L700.4 427.8 L701.7 425.9 L702.9 426.1 L704.3 427.3 L705.7 428.6 L706.9 432.7 L708.1 435.7 L709.6 432.6 L711.1 428.0 L712.3 426.9 L713.5 426.5 L714.7 425.2 L715.8 425.8 L716.9 427.6 L718.0 427.8 L719.3 432.2 L720.7 435.0 L722.0 430.4 L723.3 425.7 L724.4 424.2 L725.5 423.2 L726.6 421.7 L727.6 422.8 L728.6 424.5 L730.3 431.9 L731.6 427.1 L732.9 421.6 L734.0 420.5 L735.1 419.9 L736.2 417.8 L737.2 419.7 L738.2 422.1 L739.9 430.3 L741.1 424.5 L742.2 419.5 L743.6 417.3 L745.1 415.8 L746.5 417.9 L747.9 420.7 L749.1 426.2 L750.3 431.2 L751.7 426.6 L753.2 421.4 L754.5 361.9 L755.8 333.1 L757.1 327.1 L758.5 330.5 L760.0 334.2 L761.4 339.5 L762.7 340.9 L763.9 341.1 L765.2 340.6 L766.5 340.7 L767.8 340.5 L769.1 342.9 L770.3 343.2 L771.6 343.2 L772.9 344.5 L774.2 344.5 L775.4 346.5 L776.7 346.4 L778.0 345.4 L779.2 347.9 L780.5 345.8 L781.8 347.8 L783.0 347.9 L784.3 347.9 L785.5 347.9 L786.8 350.5 L788.1 348.8 L789.3 350.8 L790.6 352.8 L791.9 351.2 L793.1 352.1 L794.4 354.1 L795.7 354.5 L796.9 355.7 L798.2 357.0 L799.5 355.8 L800.7 357.0 L802.0 357.7 L803.3 357.7 L804.5 361.0 L805.8 361.2 L807.1 362.1 L808.3 360.9 L809.6 364.3 L810.9 364.9 L812.1 364.9 L813.4 366.6 L814.6 366.7 L815.9 366.9 L817.2 367.4 L818.4 368.7 L819.7 369.0 L821.0 370.7 L822.2 372.7 L823.5 373.6 L824.8 374.9 L826.0 375.4 L827.3 375.0 L828.6 376.7 L829.8 377.2 L831.1 379.2 L832.4 379.3 L833.6 379.4 L834.9 381.4 L836.2 383.2 L837.4 381.9 L838.7 384.5 L839.9 383.1 L841.2 384.7 L842.5 385.5 L843.7 387.9 L845.0 389.4 L846.3 389.7 L847.5 389.3 L848.8 391.8 L850.1 391.1 L851.3 391.7 L852.6 394.6 L853.9 394.6 L855.1 395.6 L856.3 396.4 L857.5 398.2 L858.8 397.5 L860.0 399.4 L861.2 399.8 L862.4 400.1" fill="none" stroke="#111" stroke-width="1.0" stroke-linejoin="round"/><path d="M359.6 473.5 L359.4 470.2 L360.5 467.9 L361.7 465.2 L363.1 462.7 L364.6 460.5 L366.1 459.3 L367.6 457.4 L368.7 458.8 L369.8 459.0 L371.1 458.0 L372.5 457.4 L373.9 456.5 L375.0 467.2 L376.1 467.4 L377.2 467.8 L378.3 465.4 L379.4 463.8 L380.7 457.1 L381.9 450.4 L383.9 454.9 L385.1 452.9 L386.4 451.9 L387.6 456.1 L388.7 460.9 L390.5 457.9 L392.0 457.3 L393.5 455.9 L394.6 457.7 L395.7 458.7 L396.8 459.6 L397.9 459.7 L399.0 461.1 L400.1 462.6 L400.9 464.8 L402.0 458.0 L403.1 450.5 L404.6 462.2 L406.1 460.1 L407.2 457.1 L408.3 453.9 L410.0 456.0 L412.0 444.9 L413.1 449.4 L414.2 453.1 L415.3 450.9 L416.4 448.8 L417.5 446.2 L418.6 444.2 L419.7 446.8 L420.8 449.7 L422.0 451.3 L423.1 453.2 L424.4 459.6 L425.7 465.1 L426.8 458.0 L427.8 450.4 L429.1 441.0 L430.5 432.5 L431.9 459.1 L433.4 459.4 L434.5 461.3 L435.6 463.8 L437.1 464.4 L438.6 464.9 L440.1 465.8 L441.6 465.6 L442.7 467.2 L443.8 467.8 L445.6 466.3 L446.4 450.1 L447.5 466.8 L448.7 468.0 L449.9 468.1 L451.2 469.5 L452.7 469.3 L454.1 469.3 L455.6 468.3 L457.1 468.8 L458.6 468.5 L460.1 469.4 L461.5 468.0 L463.0 469.3 L464.5 467.7 L466.0 465.6 L467.5 464.7 L468.7 463.3 L470.0 461.5 L471.3 462.3 L472.7 461.0 L474.0 462.4 L475.4 462.1 L476.7 462.1 L478.1 461.6 L479.4 460.9 L480.8 460.9 L482.1 460.7 L483.5 461.7 L484.8 460.0 L486.1 461.4 L487.5 459.4 L488.8 459.6 L490.2 459.6 L491.5 460.9 L492.9 459.9 L494.2 459.5 L495.6 460.5 L496.9 458.9 L498.3 459.3 L499.6 459.3 L500.9 459.7 L502.3 459.6 L503.6 459.3 L505.0 458.6 L506.3 458.5 L507.7 458.0 L509.0 459.5 L510.4 459.0 L511.7 459.1 L513.1 457.8 L514.4 458.4 L515.8 458.9 L517.1 458.4 L518.4 457.2 L519.8 457.8 L521.1 458.6 L522.5 457.1 L523.8 456.8 L525.2 457.0 L526.5 457.7 L527.9 457.9 L529.2 456.4 L530.6 456.2 L531.9 456.4 L533.2 456.5 L534.6 456.9 L535.9 456.0 L537.3 456.4 L538.6 456.0 L540.0 457.7 L541.3 457.1 L542.7 455.7 L544.0 457.3 L545.4 455.6 L546.7 456.1 L548.0 457.3 L549.4 456.8 L550.7 456.6 L552.1 455.8 L553.4 455.2 L554.8 456.1 L556.1 454.8 L557.5 455.0 L558.8 455.3 L560.0 454.4 L561.3 455.1 L562.5 455.9 L563.7 455.6 L565.0 455.1 L566.2 455.3 L567.3 451.1 L568.4 446.8 L569.7 446.5 L571.0 445.0 L572.3 444.4 L573.6 443.4 L575.1 441.1 L576.6 439.6 L578.1 438.1 L579.5 440.9 L581.0 444.1 L582.2 443.8 L583.5 443.1 L584.7 441.9 L585.9 440.8 L587.2 440.1 L588.4 438.7 L589.9 441.7 L591.4 444.3 L592.6 443.1 L593.7 442.5 L594.9 440.6 L596.1 440.1 L597.3 439.6 L598.8 441.3 L600.3 442.9 L601.7 444.1 L603.0 443.3 L604.2 442.4 L605.4 441.6 L606.7 440.3 L607.9 439.8 L609.1 439.0 L610.6 441.3 L612.1 445.3 L613.6 441.9 L615.1 437.6 L616.5 434.0 L618.0 436.8 L619.5 437.2 L621.0 440.0 L622.5 436.7 L623.9 435.0 L625.4 432.4 L626.9 432.6 L628.4 432.8 L629.7 436.4 L631.1 439.3 L632.3 435.4 L633.4 430.9 L634.9 429.7 L636.3 428.5 L637.7 429.6 L639.1 430.9 L640.3 435.1 L641.5 437.4 L642.6 434.1 L643.8 429.8 L645.2 429.1 L646.6 426.9 L648.1 429.6 L649.5 430.1 L650.7 432.9 L651.8 436.7 L653.0 432.7 L654.2 428.1 L655.6 427.1 L657.0 425.8 L658.4 427.9 L659.9 429.0 L661.0 432.7 L662.2 436.6 L663.4 432.4 L664.5 427.5 L665.9 425.4 L667.4 423.3 L668.8 426.2 L670.2 427.5 L671.4 431.8 L672.5 436.5 L674.0 431.9 L675.5 426.3 L676.8 424.9 L678.0 423.4 L679.2 422.3 L680.4 424.0 L681.6 427.2 L682.6 431.6 L683.6 437.2 L684.8 434.0 L685.9 430.5 L687.0 426.4 L688.3 424.9 L689.7 424.2 L691.0 422.5 L692.5 425.5 L693.9 426.7 L695.1 432.2 L696.2 436.0 L697.7 430.2 L699.2 424.3 L700.4 423.2 L701.7 421.5 L702.9 420.1 L704.3 423.4 L705.7 425.1 L706.9 430.4 L708.1 436.0 L709.6 429.6 L711.1 422.8 L712.3 421.7 L713.5 420.2 L714.7 418.3 L715.8 420.9 L716.9 422.5 L718.0 423.0 L719.3 430.1 L720.7 436.0 L722.0 429.0 L723.3 421.2 L724.4 420.6 L725.5 418.8 L726.6 416.4 L727.6 418.5 L728.6 422.2 L730.3 432.7 L731.6 424.9 L732.9 417.6 L734.0 415.9 L735.1 414.5 L736.2 413.6 L737.2 415.7 L738.2 418.2 L739.9 431.6 L741.1 423.5 L742.2 414.6 L743.6 412.9 L745.1 409.7 L746.5 413.4 L747.9 416.5 L749.1 424.7 L750.3 432.2 L751.7 425.5 L753.2 417.8 L754.5 346.0 L755.8 306.4 L756.9 303.4 L758.1 299.6 L759.4 300.6 L760.7 298.8 L761.9 297.2 L763.2 296.6 L764.5 295.7 L765.8 296.4 L767.0 294.3 L768.3 295.2 L769.6 293.8 L770.9 295.1 L772.2 295.5 L773.6 295.9 L774.9 297.4 L776.2 294.7 L777.5 298.0 L778.8 297.0 L780.1 297.7 L781.4 298.4 L782.8 299.0 L784.0 298.1 L785.3 298.8 L786.6 301.3 L787.8 298.6 L789.1 301.1 L790.4 301.6 L791.6 299.9 L792.9 302.5 L794.1 303.3 L795.4 304.7 L796.7 303.0 L797.9 305.9 L799.2 304.7 L800.5 305.5 L801.7 307.9 L803.0 305.6 L804.3 309.0 L805.5 309.6 L806.8 309.4 L808.1 312.2 L809.3 311.3 L810.6 312.5 L811.9 313.6 L813.1 315.4 L814.4 314.2 L815.7 316.0 L816.9 316.9 L818.2 318.4 L819.5 320.4 L820.7 319.5 L822.0 322.4 L823.2 321.9 L824.5 323.3 L825.8 323.5 L827.0 325.3 L828.3 328.0 L829.6 327.9 L830.8 329.4 L832.1 328.9 L833.4 329.8 L834.6 330.9 L835.9 333.1 L837.2 334.4 L838.4 336.1 L839.7 334.5 L841.0 338.1 L842.2 339.9 L843.5 339.8 L844.8 339.1 L846.0 341.1 L847.3 341.2 L848.6 343.3 L849.8 347.0 L851.1 347.2 L852.3 348.8 L853.6 350.6 L854.8 352.4 L856.1 352.6 L857.3 354.0 L858.6 355.4 L859.9 357.0 L861.1 358.0 L862.4 358.9" fill="none" stroke="#1414c8" stroke-width="1.0" stroke-linejoin="round"/><path d="M871.8 220.4H892.6" stroke="#666" stroke-width="1.6"/></svg>
<span class="t" style="left:324.20px;top:211.64px;font-family:'Liberation Serif','Noto Serif CJK SC',serif;font-size:11px;font-weight:bold;color:#000;transform:scale(1.000,1.029);">4096</span>
<span class="t" style="left:324.20px;top:257.24px;font-family:'Liberation Serif','Noto Serif CJK SC',serif;font-size:11px;font-weight:bold;color:#000;transform:scale(1.000,1.029);">3413</span>
<span class="t" style="left:324.20px;top:302.84px;font-family:'Liberation Serif','Noto Serif CJK SC',serif;font-size:11px;font-weight:bold;color:#000;transform:scale(1.000,1.029);">2730</span>
<span class="t" style="left:324.20px;top:348.14px;font-family:'Liberation Serif','Noto Serif CJK SC',serif;font-size:11px;font-weight:bold;color:#000;transform:scale(1.000,1.029);">2048</span>
<span class="t" style="left:323.15px;top:392.54px;font-family:'Liberation Serif','Noto Serif CJK SC',serif;font-size:11px;font-weight:bold;color:#000;transform:scale(1.048,1.029);">1365</span>
<span class="t" style="left:324.20px;top:437.74px;font-family:'Liberation Serif','Noto Serif CJK SC',serif;font-size:11px;font-weight:bold;color:#000;transform:scale(1.031,1.029);">682</span>
<span class="t" style="left:346.80px;top:485.54px;font-family:'Liberation Serif','Noto Serif CJK SC',serif;font-size:11px;font-weight:bold;color:#000;transform:scale(1.020,1.029);">0</span>
<span class="t" style="left:386.13px;top:502.77px;font-family:'Liberation Serif','Noto Serif CJK SC',serif;font-size:11px;font-weight:bold;color:#000;transform:scale(1.100,1.114);">57</span>
<span class="t" style="left:422.26px;top:502.77px;font-family:'Liberation Serif','Noto Serif CJK SC',serif;font-size:11px;font-weight:bold;color:#000;transform:scale(1.100,1.114);">114</span>
<span class="t" style="left:458.39px;top:502.77px;font-family:'Liberation Serif','Noto Serif CJK SC',serif;font-size:11px;font-weight:bold;color:#000;transform:scale(1.100,1.114);">171</span>
<span class="t" style="left:495.62px;top:502.77px;font-family:'Liberation Serif','Noto Serif CJK SC',serif;font-size:11px;font-weight:bold;color:#000;transform:scale(1.031,1.114);">228</span>
<span class="t" style="left:530.75px;top:502.77px;font-family:'Liberation Serif','Noto Serif CJK SC',serif;font-size:11px;font-weight:bold;color:#000;transform:scale(1.031,1.114);">285</span>
<span class="t" style="left:566.88px;top:502.77px;font-family:'Liberation Serif','Noto Serif CJK SC',serif;font-size:11px;font-weight:bold;color:#000;transform:scale(1.031,1.114);">342</span>
<span class="t" style="left:603.01px;top:502.77px;font-family:'Liberation Serif','Noto Serif CJK SC',serif;font-size:11px;font-weight:bold;color:#000;transform:scale(1.031,1.114);">400</span>
<span class="t" style="left:639.14px;top:502.77px;font-family:'Liberation Serif','Noto Serif CJK SC',serif;font-size:11px;font-weight:bold;color:#000;transform:scale(1.031,1.114);">457</span>
<span class="t" style="left:674.24px;top:502.77px;font-family:'Liberation Serif','Noto Serif CJK SC',serif;font-size:11px;font-weight:bold;color:#000;transform:scale(1.031,1.114);">514</span>
<span class="t" style="left:710.30px;top:502.77px;font-family:'Liberation Serif','Noto Serif CJK SC',serif;font-size:11px;font-weight:bold;color:#000;transform:scale(1.100,1.114);">571</span>
<span class="t" style="left:747.53px;top:502.77px;font-family:'Liberation Serif','Noto Serif CJK SC',serif;font-size:11px;font-weight:bold;color:#000;transform:scale(1.031,1.114);">628</span>
<span class="t" style="left:783.66px;top:502.77px;font-family:'Liberation Serif','Noto Serif CJK SC',serif;font-size:11px;font-weight:bold;color:#000;transform:scale(1.031,1.114);">685</span>
<span class="t" style="left:818.69px;top:502.77px;font-family:'Liberation Serif','Noto Serif CJK SC',serif;font-size:11px;font-weight:bold;color:#000;transform:scale(1.100,1.114);">742</span>
<span class="t" style="left:855.92px;top:502.77px;font-family:'Liberation Serif','Noto Serif CJK SC',serif;font-size:11px;font-weight:bold;color:#000;transform:scale(1.031,1.114);">800</span>
<span class="t" style="left:874.74px;top:229.15px;font-family:'Liberation Serif','Noto Serif CJK SC',serif;font-size:12px;font-weight:normal;color:#000;transform:scale(0.657,0.925);">AVG</span>
<span class="t" style="left:870.34px;top:272.84px;font-family:'Liberation Serif','Noto Serif CJK SC',serif;font-size:12px;font-weight:normal;color:#000;transform:scale(0.862,0.856);">FocusIndex</span>
<span class="t" style="left:872.40px;top:290.95px;font-family:'Liberation Serif','Noto Serif CJK SC',serif;font-size:20px;font-weight:normal;color:#000;transform:scale(0.900,0.950);">166</span>
<span class="t" style="left:870.37px;top:332.96px;font-family:'Liberation Serif','Noto Serif CJK SC',serif;font-size:12px;font-weight:normal;color:#000;transform:scale(0.825,0.844);">MaxValue:</span>
<span class="t" style="left:872.33px;top:351.05px;font-family:'Liberation Serif','Noto Serif CJK SC',serif;font-size:20px;font-weight:normal;color:#000;transform:scale(0.933,0.950);">175</span>
<div style="left:918.5px;top:163px;width:255.5px;height:422px;background:#fff;border:1px solid #b4c4da;border-right:none;"></div>
<div style="left:919.5px;top:164px;width:254.5px;height:420px;border:2px solid #dfe8f4;border-right:none;"></div>
<div style="left:919.5px;top:163.5px;width:254.5px;height:1.5px;background:#f4f8fc;"></div>
<div style="left:921px;top:165px;width:253px;height:21.7px;background:linear-gradient(#9cb7d8,#a4bddc);"></div>
<span class="t" style="left:923.20px;top:172.15px;font-family:'Liberation Sans','Noto Sans CJK SC',sans-serif;font-size:12px;font-weight:bold;color:#101c34;transform:scale(0.754,0.800);">Output</span>
<div style="left:1170.2px;top:167.2px;width:6px;height:14.4px;background:linear-gradient(#f7aeb4,#e58e8a);border:1.3px solid #45152f;border-radius:2.5px 0 0 2.5px;"></div>
<span class="t" style="left:925.50px;top:190.90px;font-family:'Liberation Sans','Noto Sans CJK SC',sans-serif;font-size:11px;font-weight:normal;color:#000;transform:scale(0.877,1.000);">try Open Motor</span>
<span class="t" style="left:924.65px;top:203.20px;font-family:'Liberation Sans','Noto Sans CJK SC',sans-serif;font-size:11px;font-weight:normal;color:#000;transform:scale(0.854,1.000);">init sc300 motor and move to startpos</span>
<span class="t" style="left:924.61px;top:215.50px;font-family:'Liberation Sans','Noto Sans CJK SC',sans-serif;font-size:11px;font-weight:normal;color:#000;transform:scale(0.887,1.000);">&gt;&nbsp; Motor connected</span>
<span class="t" style="left:925.50px;top:227.80px;font-family:'Liberation Sans','Noto Sans CJK SC',sans-serif;font-size:11px;font-weight:normal;color:#000;transform:scale(0.815,1.000);">try Open Camera</span>
<span class="t" style="left:924.66px;top:240.10px;font-family:'Liberation Sans','Noto Sans CJK SC',sans-serif;font-size:11px;font-weight:normal;color:#000;transform:scale(0.837,1.000);">&gt;&nbsp; Camera connected</span>
<div style="left:923.5px;top:251.8px;width:250.5px;height:11.8px;background:#3399ff;"></div>
<span class="t" style="left:925.50px;top:252.40px;font-family:'Liberation Sans','Noto Sans CJK SC',sans-serif;font-size:11px;font-weight:normal;color:#fff;transform:scale(0.792,1.000);">The Reslut is 1.20ms,Camera Gain is 1.00</span>
<div style="left:921.5px;top:562.5px;width:252.5px;height:20.5px;background:#ececec;border-top:1px solid #6f6f6f;"></div>
<svg style="left:921px;top:562px" width="253" height="22" viewBox="921 562 253 22"><path d="M981.5 562.5 L987.5 577.5 L1010.5 577.5 L1017 562.5" fill="#fff" stroke="#333" stroke-width="1"/><path d="M982 562.5 L1016.5 562.5" stroke="#fff" stroke-width="1.4"/><g fill="#000"><rect x="927.8" y="568" width="1.2" height="7"/><path d="M932.5 568 L932.5 575 L929 571.5Z"/><path d="M945 568 L945 575 L941.5 571.5Z"/><path d="M957.5 568 L957.5 575 L961 571.5Z"/><path d="M971 568 L971 575 L974.5 571.5Z"/><rect x="974.5" y="568" width="1.2" height="7"/></g></svg>
<span class="t" style="left:990.60px;top:563.71px;font-family:'Liberation Serif','Noto Serif CJK SC',serif;font-size:11px;font-weight:bold;color:#000;transform:scale(0.894,1.044);">Log</span>
<div style="left:1141.8px;top:408.8px;width:40px;height:47.4px;background:#9e9e9e;border-radius:5px;"></div>
<svg style="left:1150px;top:417px" width="26" height="33" viewBox="1150 417 26 33"><path d="M1156.4 420.3 L1166.8 420.3 L1166.8 426.6 L1168.6 426.8 Q1171 427.6 1171 430.5 L1171 436 Q1170.6 446.9 1161.4 446.9 Q1152.2 446.9 1151.9 436 L1151.9 430.5 Q1151.9 427.6 1154.4 426.8 L1156.4 426.6 Z" fill="#f1f1f1"/><rect x="1158" y="422.4" width="2.8" height="1.8" fill="#a8a8a8"/><rect x="1162.4" y="422.4" width="2.8" height="1.8" fill="#a8a8a8"/></svg>
<div style="left:1174px;top:0px;width:21px;height:608px;background:#fff;"></div>
</body></html>
